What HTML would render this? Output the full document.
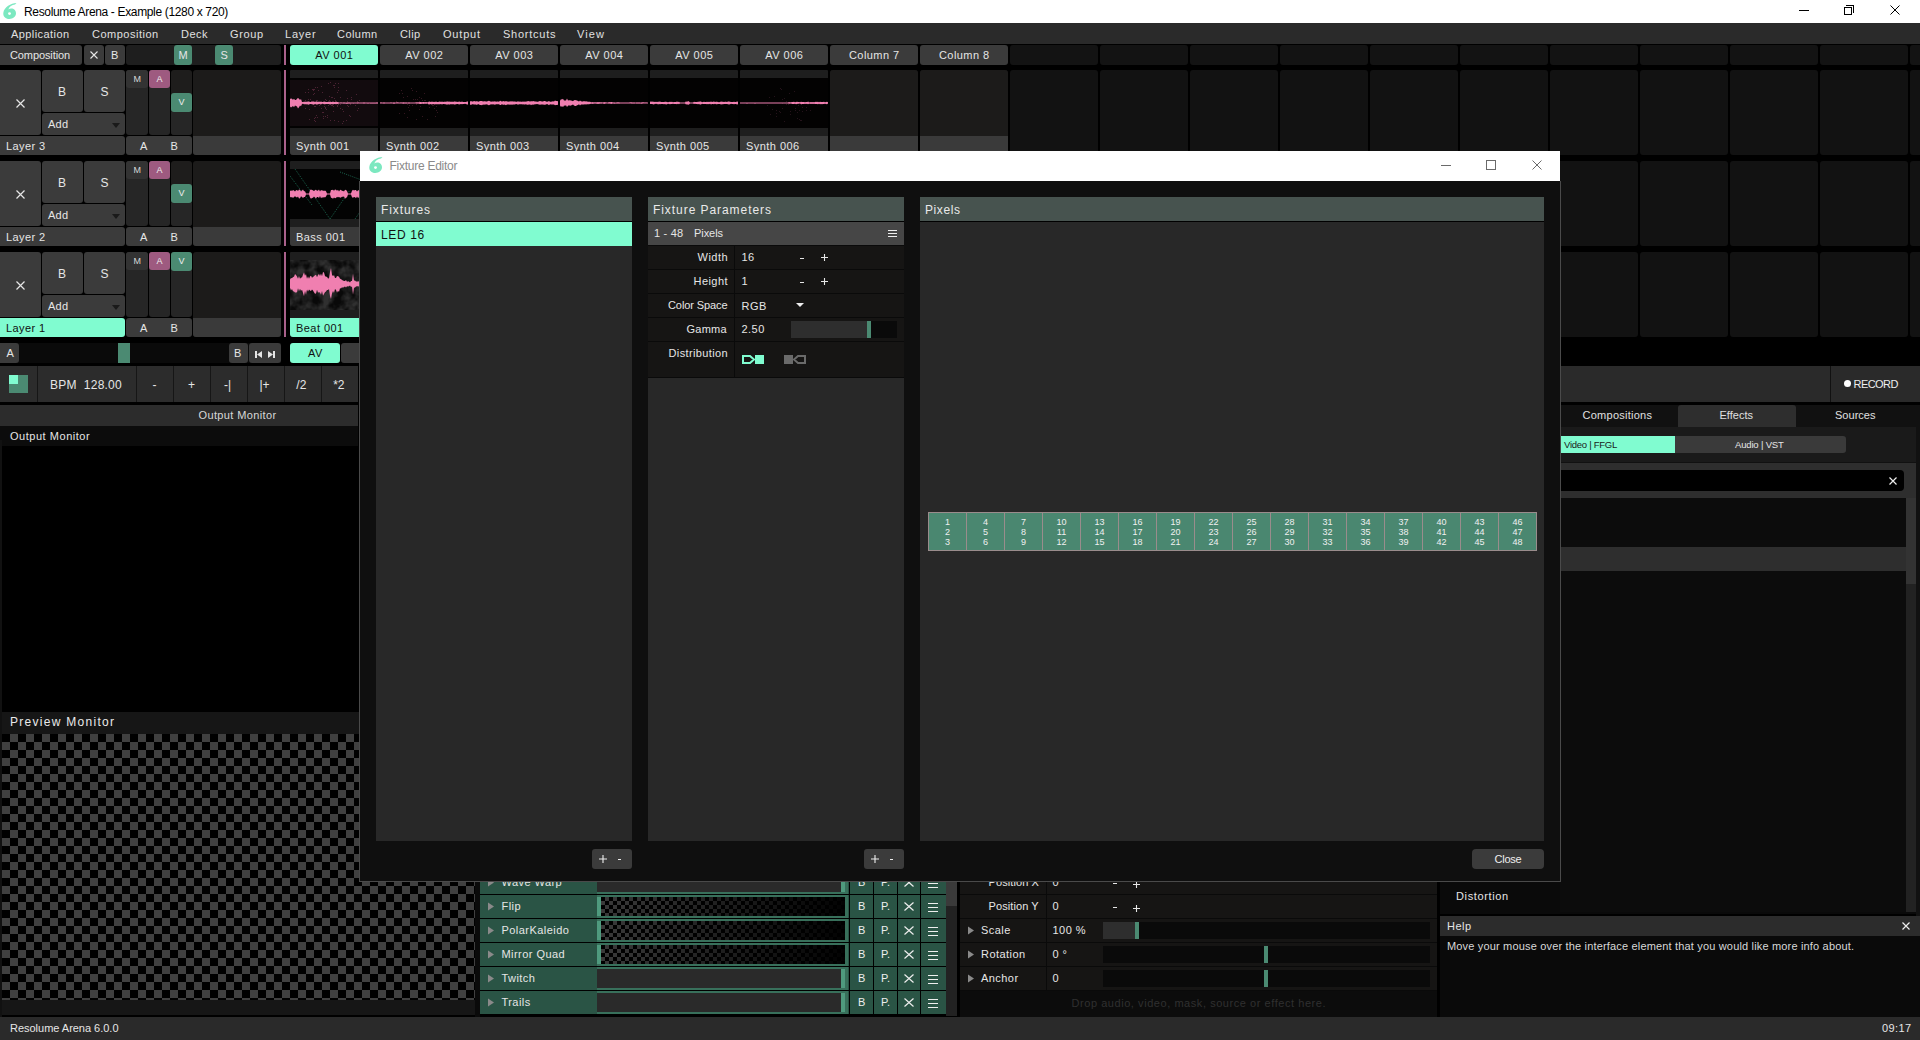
<!DOCTYPE html>
<html><head><meta charset="utf-8">
<style>
*{box-sizing:border-box;margin:0;padding:0}
html,body{width:1920px;height:1040px;overflow:hidden;background:#000;font-family:"Liberation Sans",sans-serif;color:#e8e8e8}
.a{position:absolute}
.t{position:absolute;white-space:pre;line-height:1;font-family:"Liberation Sans",sans-serif}
svg{position:absolute}
</style></head><body>
<div class="a" style="left:0px;top:0px;width:1920px;height:23px;background:#fff;"></div>
<svg class="a" style="left:3px;top:3px" width="14" height="16" viewBox="0 0 14 16"><path d="M13.5 0 C8 0.3 1 4 0.3 10 C0 13.5 2.5 16 6.3 16 C10 16 13 13.6 13 10.3 C13 7.3 10.8 5.6 8.3 5.6 C7 5.6 6 6 5.3 6.5 C6.3 3.8 9 2 12 1.6 Z" fill="#7ce8c0"/><circle cx="6.5" cy="10.6" r="1.4" fill="#fff"/></svg>
<div class="t" style="left:24.00px;top:6px;font-size:12px;color:#000;letter-spacing:-0.346px;">Resolume Arena - Example (1280 x 720)</div>
<div class="a" style="left:1799px;top:10px;width:10px;height:1px;background:#000;"></div>
<div class="a" style="left:1844px;top:7px;width:8px;height:8px;border:1px solid #000"></div>
<div class="a" style="left:1846px;top:5px;width:8px;height:8px;border-top:1px solid #000;border-right:1px solid #000"></div>
<svg class="a" style="left:1890px;top:5px" width="10" height="10" viewBox="0 0 10 10"><path d="M0.5 0.5L9.5 9.5M9.5 0.5L0.5 9.5" stroke="#000" stroke-width="1.0"/></svg>
<div class="a" style="left:0px;top:23px;width:1920px;height:21px;background:#2a2a2a;"></div>
<div class="t" style="left:11.00px;top:29px;font-size:11px;color:#e0e0e0;letter-spacing:0.430px;">Application</div>
<div class="t" style="left:92.00px;top:29px;font-size:11px;color:#e0e0e0;letter-spacing:0.498px;">Composition</div>
<div class="t" style="left:181.00px;top:29px;font-size:11px;color:#e0e0e0;letter-spacing:0.479px;">Deck</div>
<div class="t" style="left:230.00px;top:29px;font-size:11px;color:#e0e0e0;letter-spacing:0.636px;">Group</div>
<div class="t" style="left:285.00px;top:29px;font-size:11px;color:#e0e0e0;letter-spacing:0.787px;">Layer</div>
<div class="t" style="left:337.00px;top:29px;font-size:11px;color:#e0e0e0;letter-spacing:0.443px;">Column</div>
<div class="t" style="left:400.00px;top:29px;font-size:11px;color:#e0e0e0;letter-spacing:0.389px;">Clip</div>
<div class="t" style="left:443.00px;top:29px;font-size:11px;color:#e0e0e0;letter-spacing:0.807px;">Output</div>
<div class="t" style="left:503.00px;top:29px;font-size:11px;color:#e0e0e0;letter-spacing:0.754px;">Shortcuts</div>
<div class="t" style="left:577.00px;top:29px;font-size:11px;color:#e0e0e0;letter-spacing:1.100px;">View</div>
<div class="a" style="left:0px;top:45px;width:82px;height:20px;background:#3b3b3b;border-radius:0 3px 3px 0;"></div>
<div class="t" style="left:10.00px;top:50px;font-size:11px;color:#e6e6e6;letter-spacing:-0.102px;">Composition</div>
<div class="a" style="left:84px;top:45px;width:20px;height:20px;background:#3b3b3b;border-radius:3px;"></div>
<svg class="a" style="left:90px;top:51px" width="8" height="8" viewBox="0 0 8 8"><path d="M0.5 0.5L7.5 7.5M7.5 0.5L0.5 7.5" stroke="#e6e6e6" stroke-width="1.1"/></svg>
<div class="a" style="left:105px;top:45px;width:20px;height:20px;background:#3b3b3b;border-radius:3px;"></div>
<div class="t" style="left:111.00px;top:50px;font-size:11px;color:#e6e6e6;">B</div>
<div class="a" style="left:126px;top:45px;width:155px;height:20px;background:#1e1e1e;border-radius:3px;"></div>
<div class="a" style="left:174px;top:45px;width:18px;height:20px;background:#4b8a72;border-radius:3px;"></div>
<div class="t" style="left:178.50px;top:50px;font-size:11px;color:#e6e6e6;">M</div>
<div class="a" style="left:215px;top:45px;width:18px;height:20px;background:#4b8a72;border-radius:3px;"></div>
<div class="t" style="left:220.50px;top:50px;font-size:11px;color:#e6e6e6;">S</div>
<div class="a" style="left:284px;top:45px;width:2px;height:20px;background:#a8608a;"></div>
<div class="a" style="left:290px;top:45px;width:88px;height:20px;background:#80fcd0;border-radius:3px;"></div>
<div class="t" style="left:315.30px;top:50px;font-size:11px;color:#111;letter-spacing:0.450px;">AV 001</div>
<div class="a" style="left:380px;top:45px;width:88px;height:20px;background:#3b3b3b;border-radius:3px;"></div>
<div class="t" style="left:405.30px;top:50px;font-size:11px;color:#e6e6e6;letter-spacing:0.450px;">AV 002</div>
<div class="a" style="left:470px;top:45px;width:88px;height:20px;background:#3b3b3b;border-radius:3px;"></div>
<div class="t" style="left:495.30px;top:50px;font-size:11px;color:#e6e6e6;letter-spacing:0.450px;">AV 003</div>
<div class="a" style="left:560px;top:45px;width:88px;height:20px;background:#3b3b3b;border-radius:3px;"></div>
<div class="t" style="left:585.30px;top:50px;font-size:11px;color:#e6e6e6;letter-spacing:0.450px;">AV 004</div>
<div class="a" style="left:650px;top:45px;width:88px;height:20px;background:#3b3b3b;border-radius:3px;"></div>
<div class="t" style="left:675.30px;top:50px;font-size:11px;color:#e6e6e6;letter-spacing:0.450px;">AV 005</div>
<div class="a" style="left:740px;top:45px;width:88px;height:20px;background:#3b3b3b;border-radius:3px;"></div>
<div class="t" style="left:765.30px;top:50px;font-size:11px;color:#e6e6e6;letter-spacing:0.450px;">AV 006</div>
<div class="a" style="left:830px;top:45px;width:88px;height:20px;background:#3b3b3b;border-radius:3px;"></div>
<div class="t" style="left:848.95px;top:50px;font-size:11px;color:#e6e6e6;letter-spacing:0.450px;">Column 7</div>
<div class="a" style="left:920px;top:45px;width:88px;height:20px;background:#3b3b3b;border-radius:3px;"></div>
<div class="t" style="left:938.95px;top:50px;font-size:11px;color:#e6e6e6;letter-spacing:0.450px;">Column 8</div>
<div class="a" style="left:1010px;top:45px;width:88px;height:20px;background:#131313;border-radius:3px;"></div>
<div class="a" style="left:1100px;top:45px;width:88px;height:20px;background:#131313;border-radius:3px;"></div>
<div class="a" style="left:1190px;top:45px;width:88px;height:20px;background:#131313;border-radius:3px;"></div>
<div class="a" style="left:1280px;top:45px;width:88px;height:20px;background:#131313;border-radius:3px;"></div>
<div class="a" style="left:1370px;top:45px;width:88px;height:20px;background:#131313;border-radius:3px;"></div>
<div class="a" style="left:1460px;top:45px;width:88px;height:20px;background:#131313;border-radius:3px;"></div>
<div class="a" style="left:1550px;top:45px;width:88px;height:20px;background:#131313;border-radius:3px;"></div>
<div class="a" style="left:1640px;top:45px;width:88px;height:20px;background:#131313;border-radius:3px;"></div>
<div class="a" style="left:1730px;top:45px;width:88px;height:20px;background:#131313;border-radius:3px;"></div>
<div class="a" style="left:1820px;top:45px;width:88px;height:20px;background:#131313;border-radius:3px;"></div>
<div class="a" style="left:1910px;top:45px;width:88px;height:20px;background:#131313;border-radius:3px;"></div>
<div class="a" style="left:0px;top:70px;width:41px;height:65px;background:#3b3b3b;border-radius:0 3px 3px 0;"></div>
<svg class="a" style="left:16px;top:99px" width="9" height="9" viewBox="0 0 9 9"><path d="M0.5 0.5L8.5 8.5M8.5 0.5L0.5 8.5" stroke="#e6e6e6" stroke-width="1.2"/></svg>
<div class="a" style="left:42px;top:70px;width:41px;height:42px;background:#3b3b3b;border-radius:3px;"></div>
<div class="t" style="left:58.00px;top:86px;font-size:12px;color:#e6e6e6;">B</div>
<div class="a" style="left:84px;top:70px;width:41px;height:42px;background:#3b3b3b;border-radius:3px;"></div>
<div class="t" style="left:100.50px;top:86px;font-size:12px;color:#e6e6e6;">S</div>
<div class="a" style="left:42px;top:113px;width:83px;height:22px;background:#3b3b3b;border-radius:3px;"></div>
<div class="t" style="left:48.00px;top:119px;font-size:11px;color:#e6e6e6;letter-spacing:0.273px;">Add</div>
<svg class="a" style="left:112px;top:123px" width="8" height="5" viewBox="0 0 8 5"><path d="M0 0H8L4 5Z" fill="#1a1a1a"/></svg>
<div class="a" style="left:0px;top:136px;width:125px;height:19px;background:#3b3b3b;border-radius:0 3px 3px 0;"></div>
<div class="t" style="left:6.00px;top:141px;font-size:11px;color:#e6e6e6;letter-spacing:0.405px;">Layer 3</div>
<div class="a" style="left:126px;top:70px;width:22px;height:65px;background:#262626;border-radius:3px;"></div>
<div class="a" style="left:149px;top:70px;width:21px;height:65px;background:#262626;border-radius:3px;"></div>
<div class="a" style="left:171px;top:70px;width:21px;height:65px;background:#1e1d1c;border-radius:3px;"></div>
<div class="a" style="left:171px;top:112px;width:21px;height:23px;background:#262626;border-radius:0 0 3px 3px;"></div>
<div class="a" style="left:126px;top:70px;width:22px;height:18px;background:#333;border-radius:3px;"></div>
<div class="t" style="left:133.50px;top:75px;font-size:9px;color:#d8d8d8;">M</div>
<div class="a" style="left:149px;top:70px;width:21px;height:18px;background:#9e5a80;border-radius:3px;"></div>
<div class="t" style="left:156.50px;top:75px;font-size:9px;color:#eee;">A</div>
<div class="a" style="left:171px;top:93px;width:21px;height:19px;background:#4b8a72;border-radius:3px;"></div>
<div class="t" style="left:178.50px;top:98px;font-size:9px;color:#eee;">V</div>
<div class="a" style="left:126px;top:136px;width:66px;height:19px;background:#3b3b3b;border-radius:3px;"></div>
<div class="t" style="left:140.00px;top:141px;font-size:11px;color:#e6e6e6;">A</div>
<div class="t" style="left:170.50px;top:141px;font-size:11px;color:#e6e6e6;">B</div>
<div class="a" style="left:193px;top:70px;width:88px;height:85px;background:#1c1b1a;border-radius:3px;"></div>
<div class="a" style="left:193px;top:136px;width:88px;height:19px;background:#3a3a3a;border-radius:0 0 3px 3px;"></div>
<div class="a" style="left:284px;top:70px;width:2px;height:85px;background:#a8608a;"></div>
<div class="a" style="left:290px;top:70px;width:88px;height:85px;background:#121212;border-radius:3px;"></div>
<div class="a" style="left:380px;top:70px;width:88px;height:85px;background:#121212;border-radius:3px;"></div>
<div class="a" style="left:470px;top:70px;width:88px;height:85px;background:#121212;border-radius:3px;"></div>
<div class="a" style="left:560px;top:70px;width:88px;height:85px;background:#121212;border-radius:3px;"></div>
<div class="a" style="left:650px;top:70px;width:88px;height:85px;background:#121212;border-radius:3px;"></div>
<div class="a" style="left:740px;top:70px;width:88px;height:85px;background:#121212;border-radius:3px;"></div>
<div class="a" style="left:830px;top:70px;width:88px;height:85px;background:#121212;border-radius:3px;"></div>
<div class="a" style="left:920px;top:70px;width:88px;height:85px;background:#121212;border-radius:3px;"></div>
<div class="a" style="left:1010px;top:70px;width:88px;height:85px;background:#121212;border-radius:3px;"></div>
<div class="a" style="left:1100px;top:70px;width:88px;height:85px;background:#121212;border-radius:3px;"></div>
<div class="a" style="left:1190px;top:70px;width:88px;height:85px;background:#121212;border-radius:3px;"></div>
<div class="a" style="left:1280px;top:70px;width:88px;height:85px;background:#121212;border-radius:3px;"></div>
<div class="a" style="left:1370px;top:70px;width:88px;height:85px;background:#121212;border-radius:3px;"></div>
<div class="a" style="left:1460px;top:70px;width:88px;height:85px;background:#121212;border-radius:3px;"></div>
<div class="a" style="left:1550px;top:70px;width:88px;height:85px;background:#121212;border-radius:3px;"></div>
<div class="a" style="left:1640px;top:70px;width:88px;height:85px;background:#121212;border-radius:3px;"></div>
<div class="a" style="left:1730px;top:70px;width:88px;height:85px;background:#121212;border-radius:3px;"></div>
<div class="a" style="left:1820px;top:70px;width:88px;height:85px;background:#121212;border-radius:3px;"></div>
<div class="a" style="left:1910px;top:70px;width:88px;height:85px;background:#121212;border-radius:3px;"></div>
<div class="a" style="left:0px;top:161px;width:41px;height:65px;background:#3b3b3b;border-radius:0 3px 3px 0;"></div>
<svg class="a" style="left:16px;top:190px" width="9" height="9" viewBox="0 0 9 9"><path d="M0.5 0.5L8.5 8.5M8.5 0.5L0.5 8.5" stroke="#e6e6e6" stroke-width="1.2"/></svg>
<div class="a" style="left:42px;top:161px;width:41px;height:42px;background:#3b3b3b;border-radius:3px;"></div>
<div class="t" style="left:58.00px;top:177px;font-size:12px;color:#e6e6e6;">B</div>
<div class="a" style="left:84px;top:161px;width:41px;height:42px;background:#3b3b3b;border-radius:3px;"></div>
<div class="t" style="left:100.50px;top:177px;font-size:12px;color:#e6e6e6;">S</div>
<div class="a" style="left:42px;top:204px;width:83px;height:22px;background:#3b3b3b;border-radius:3px;"></div>
<div class="t" style="left:48.00px;top:210px;font-size:11px;color:#e6e6e6;letter-spacing:0.273px;">Add</div>
<svg class="a" style="left:112px;top:214px" width="8" height="5" viewBox="0 0 8 5"><path d="M0 0H8L4 5Z" fill="#1a1a1a"/></svg>
<div class="a" style="left:0px;top:227px;width:125px;height:19px;background:#3b3b3b;border-radius:0 3px 3px 0;"></div>
<div class="t" style="left:6.00px;top:232px;font-size:11px;color:#e6e6e6;letter-spacing:0.405px;">Layer 2</div>
<div class="a" style="left:126px;top:161px;width:22px;height:65px;background:#262626;border-radius:3px;"></div>
<div class="a" style="left:149px;top:161px;width:21px;height:65px;background:#262626;border-radius:3px;"></div>
<div class="a" style="left:171px;top:161px;width:21px;height:65px;background:#1e1d1c;border-radius:3px;"></div>
<div class="a" style="left:171px;top:203px;width:21px;height:23px;background:#262626;border-radius:0 0 3px 3px;"></div>
<div class="a" style="left:126px;top:161px;width:22px;height:18px;background:#333;border-radius:3px;"></div>
<div class="t" style="left:133.50px;top:166px;font-size:9px;color:#d8d8d8;">M</div>
<div class="a" style="left:149px;top:161px;width:21px;height:18px;background:#9e5a80;border-radius:3px;"></div>
<div class="t" style="left:156.50px;top:166px;font-size:9px;color:#eee;">A</div>
<div class="a" style="left:171px;top:184px;width:21px;height:19px;background:#4b8a72;border-radius:3px;"></div>
<div class="t" style="left:178.50px;top:189px;font-size:9px;color:#eee;">V</div>
<div class="a" style="left:126px;top:227px;width:66px;height:19px;background:#3b3b3b;border-radius:3px;"></div>
<div class="t" style="left:140.00px;top:232px;font-size:11px;color:#e6e6e6;">A</div>
<div class="t" style="left:170.50px;top:232px;font-size:11px;color:#e6e6e6;">B</div>
<div class="a" style="left:193px;top:161px;width:88px;height:85px;background:#1c1b1a;border-radius:3px;"></div>
<div class="a" style="left:193px;top:227px;width:88px;height:19px;background:#3a3a3a;border-radius:0 0 3px 3px;"></div>
<div class="a" style="left:284px;top:161px;width:2px;height:85px;background:#a8608a;"></div>
<div class="a" style="left:290px;top:161px;width:88px;height:85px;background:#121212;border-radius:3px;"></div>
<div class="a" style="left:380px;top:161px;width:88px;height:85px;background:#121212;border-radius:3px;"></div>
<div class="a" style="left:470px;top:161px;width:88px;height:85px;background:#121212;border-radius:3px;"></div>
<div class="a" style="left:560px;top:161px;width:88px;height:85px;background:#121212;border-radius:3px;"></div>
<div class="a" style="left:650px;top:161px;width:88px;height:85px;background:#121212;border-radius:3px;"></div>
<div class="a" style="left:740px;top:161px;width:88px;height:85px;background:#121212;border-radius:3px;"></div>
<div class="a" style="left:830px;top:161px;width:88px;height:85px;background:#121212;border-radius:3px;"></div>
<div class="a" style="left:920px;top:161px;width:88px;height:85px;background:#121212;border-radius:3px;"></div>
<div class="a" style="left:1010px;top:161px;width:88px;height:85px;background:#121212;border-radius:3px;"></div>
<div class="a" style="left:1100px;top:161px;width:88px;height:85px;background:#121212;border-radius:3px;"></div>
<div class="a" style="left:1190px;top:161px;width:88px;height:85px;background:#121212;border-radius:3px;"></div>
<div class="a" style="left:1280px;top:161px;width:88px;height:85px;background:#121212;border-radius:3px;"></div>
<div class="a" style="left:1370px;top:161px;width:88px;height:85px;background:#121212;border-radius:3px;"></div>
<div class="a" style="left:1460px;top:161px;width:88px;height:85px;background:#121212;border-radius:3px;"></div>
<div class="a" style="left:1550px;top:161px;width:88px;height:85px;background:#121212;border-radius:3px;"></div>
<div class="a" style="left:1640px;top:161px;width:88px;height:85px;background:#121212;border-radius:3px;"></div>
<div class="a" style="left:1730px;top:161px;width:88px;height:85px;background:#121212;border-radius:3px;"></div>
<div class="a" style="left:1820px;top:161px;width:88px;height:85px;background:#121212;border-radius:3px;"></div>
<div class="a" style="left:1910px;top:161px;width:88px;height:85px;background:#121212;border-radius:3px;"></div>
<div class="a" style="left:0px;top:252px;width:41px;height:65px;background:#3b3b3b;border-radius:0 3px 3px 0;"></div>
<svg class="a" style="left:16px;top:281px" width="9" height="9" viewBox="0 0 9 9"><path d="M0.5 0.5L8.5 8.5M8.5 0.5L0.5 8.5" stroke="#e6e6e6" stroke-width="1.2"/></svg>
<div class="a" style="left:42px;top:252px;width:41px;height:42px;background:#3b3b3b;border-radius:3px;"></div>
<div class="t" style="left:58.00px;top:268px;font-size:12px;color:#e6e6e6;">B</div>
<div class="a" style="left:84px;top:252px;width:41px;height:42px;background:#3b3b3b;border-radius:3px;"></div>
<div class="t" style="left:100.50px;top:268px;font-size:12px;color:#e6e6e6;">S</div>
<div class="a" style="left:42px;top:295px;width:83px;height:22px;background:#3b3b3b;border-radius:3px;"></div>
<div class="t" style="left:48.00px;top:301px;font-size:11px;color:#e6e6e6;letter-spacing:0.273px;">Add</div>
<svg class="a" style="left:112px;top:305px" width="8" height="5" viewBox="0 0 8 5"><path d="M0 0H8L4 5Z" fill="#1a1a1a"/></svg>
<div class="a" style="left:0px;top:318px;width:125px;height:19px;background:#80fcd0;border-radius:0 3px 3px 0;"></div>
<div class="t" style="left:6.00px;top:323px;font-size:11px;color:#111;letter-spacing:0.405px;">Layer 1</div>
<div class="a" style="left:126px;top:252px;width:22px;height:65px;background:#262626;border-radius:3px;"></div>
<div class="a" style="left:149px;top:252px;width:21px;height:65px;background:#262626;border-radius:3px;"></div>
<div class="a" style="left:171px;top:252px;width:21px;height:65px;background:#262626;border-radius:3px;"></div>
<div class="a" style="left:126px;top:252px;width:22px;height:18px;background:#333;border-radius:3px;"></div>
<div class="t" style="left:133.50px;top:257px;font-size:9px;color:#d8d8d8;">M</div>
<div class="a" style="left:149px;top:252px;width:21px;height:18px;background:#9e5a80;border-radius:3px;"></div>
<div class="t" style="left:156.50px;top:257px;font-size:9px;color:#eee;">A</div>
<div class="a" style="left:171px;top:252px;width:21px;height:19px;background:#4b8a72;border-radius:3px;"></div>
<div class="t" style="left:178.50px;top:257px;font-size:9px;color:#eee;">V</div>
<div class="a" style="left:126px;top:318px;width:66px;height:19px;background:#3b3b3b;border-radius:3px;"></div>
<div class="t" style="left:140.00px;top:323px;font-size:11px;color:#e6e6e6;">A</div>
<div class="t" style="left:170.50px;top:323px;font-size:11px;color:#e6e6e6;">B</div>
<div class="a" style="left:193px;top:252px;width:88px;height:85px;background:#1c1b1a;border-radius:3px;"></div>
<div class="a" style="left:193px;top:318px;width:88px;height:19px;background:#3a3a3a;border-radius:0 0 3px 3px;"></div>
<div class="a" style="left:284px;top:252px;width:2px;height:85px;background:#a8608a;"></div>
<div class="a" style="left:290px;top:252px;width:88px;height:85px;background:#121212;border-radius:3px;"></div>
<div class="a" style="left:380px;top:252px;width:88px;height:85px;background:#121212;border-radius:3px;"></div>
<div class="a" style="left:470px;top:252px;width:88px;height:85px;background:#121212;border-radius:3px;"></div>
<div class="a" style="left:560px;top:252px;width:88px;height:85px;background:#121212;border-radius:3px;"></div>
<div class="a" style="left:650px;top:252px;width:88px;height:85px;background:#121212;border-radius:3px;"></div>
<div class="a" style="left:740px;top:252px;width:88px;height:85px;background:#121212;border-radius:3px;"></div>
<div class="a" style="left:830px;top:252px;width:88px;height:85px;background:#121212;border-radius:3px;"></div>
<div class="a" style="left:920px;top:252px;width:88px;height:85px;background:#121212;border-radius:3px;"></div>
<div class="a" style="left:1010px;top:252px;width:88px;height:85px;background:#121212;border-radius:3px;"></div>
<div class="a" style="left:1100px;top:252px;width:88px;height:85px;background:#121212;border-radius:3px;"></div>
<div class="a" style="left:1190px;top:252px;width:88px;height:85px;background:#121212;border-radius:3px;"></div>
<div class="a" style="left:1280px;top:252px;width:88px;height:85px;background:#121212;border-radius:3px;"></div>
<div class="a" style="left:1370px;top:252px;width:88px;height:85px;background:#121212;border-radius:3px;"></div>
<div class="a" style="left:1460px;top:252px;width:88px;height:85px;background:#121212;border-radius:3px;"></div>
<div class="a" style="left:1550px;top:252px;width:88px;height:85px;background:#121212;border-radius:3px;"></div>
<div class="a" style="left:1640px;top:252px;width:88px;height:85px;background:#121212;border-radius:3px;"></div>
<div class="a" style="left:1730px;top:252px;width:88px;height:85px;background:#121212;border-radius:3px;"></div>
<div class="a" style="left:1820px;top:252px;width:88px;height:85px;background:#121212;border-radius:3px;"></div>
<div class="a" style="left:1910px;top:252px;width:88px;height:85px;background:#121212;border-radius:3px;"></div>
<div class="a" style="left:290px;top:70px;width:88px;height:85px;background:#1e1e1e;border-radius:1px 1px 3px 3px;"></div>
<svg class="a" style="left:290px;top:78px" width="88" height="50" viewBox="290 78 88 50"><rect x="290" y="78" width="88" height="50" fill="#030202"/><rect x="290" y="80" width="88" height="46" fill="#120b0e"/><rect x="313" y="90" width="1" height="1" fill="#4a2232"/><rect x="347" y="105" width="1" height="1" fill="#4a2232"/><rect x="351" y="97" width="1" height="1" fill="#4a2232"/><rect x="335" y="100" width="1" height="1" fill="#4a2232"/><rect x="319" y="105" width="1" height="1" fill="#4a2232"/><rect x="310" y="99" width="1" height="1" fill="#4a2232"/><rect x="340" y="104" width="1" height="1" fill="#4a2232"/><rect x="331" y="97" width="1" height="1" fill="#4a2232"/><rect x="332" y="97" width="1" height="1" fill="#4a2232"/><rect x="325" y="99" width="1" height="1" fill="#4a2232"/><rect x="357" y="103" width="1" height="1" fill="#4a2232"/><rect x="333" y="111" width="1" height="1" fill="#4a2232"/><rect x="357" y="101" width="1" height="1" fill="#4a2232"/><rect x="308" y="99" width="1" height="1" fill="#4a2232"/><rect x="340" y="97" width="1" height="1" fill="#4a2232"/><rect x="325" y="108" width="1" height="1" fill="#4a2232"/><rect x="333" y="106" width="1" height="1" fill="#4a2232"/><rect x="323" y="118" width="1" height="1" fill="#4a2232"/><rect x="353" y="103" width="1" height="1" fill="#4a2232"/><rect x="323" y="112" width="1" height="1" fill="#4a2232"/><rect x="338" y="90" width="1" height="1" fill="#4a2232"/><rect x="323" y="116" width="1" height="1" fill="#4a2232"/><rect x="329" y="100" width="1" height="1" fill="#4a2232"/><rect x="332" y="103" width="1" height="1" fill="#4a2232"/><rect x="330" y="82" width="1" height="1" fill="#4a2232"/><rect x="355" y="105" width="1" height="1" fill="#4a2232"/><rect x="316" y="115" width="1" height="1" fill="#4a2232"/><rect x="334" y="103" width="1" height="1" fill="#4a2232"/><rect x="342" y="123" width="1" height="1" fill="#4a2232"/><rect x="338" y="121" width="1" height="1" fill="#4a2232"/><rect x="356" y="94" width="1" height="1" fill="#4a2232"/><rect x="322" y="112" width="1" height="1" fill="#4a2232"/><rect x="305" y="100" width="1" height="1" fill="#4a2232"/><rect x="349" y="115" width="1" height="1" fill="#4a2232"/><rect x="338" y="83" width="1" height="1" fill="#4a2232"/><rect x="358" y="108" width="1" height="1" fill="#4a2232"/><rect x="342" y="109" width="1" height="1" fill="#4a2232"/><rect x="308" y="89" width="1" height="1" fill="#4a2232"/><rect x="315" y="121" width="1" height="1" fill="#4a2232"/><rect x="317" y="100" width="1" height="1" fill="#4a2232"/><rect x="326" y="109" width="1" height="1" fill="#4a2232"/><rect x="337" y="106" width="1" height="1" fill="#4a2232"/><rect x="332" y="105" width="1" height="1" fill="#4a2232"/><rect x="349" y="102" width="1" height="1" fill="#4a2232"/><rect x="321" y="108" width="1" height="1" fill="#4a2232"/><rect x="308" y="92" width="1" height="1" fill="#4a2232"/><rect x="314" y="106" width="1" height="1" fill="#4a2232"/><rect x="357" y="110" width="1" height="1" fill="#4a2232"/><rect x="348" y="106" width="1" height="1" fill="#4a2232"/><rect x="334" y="98" width="1" height="1" fill="#4a2232"/><rect x="313" y="89" width="1" height="1" fill="#4a2232"/><rect x="343" y="111" width="1" height="1" fill="#4a2232"/><rect x="346" y="120" width="1" height="1" fill="#4a2232"/><rect x="325" y="116" width="1" height="1" fill="#4a2232"/><rect x="357" y="103" width="1" height="1" fill="#4a2232"/><rect x="347" y="101" width="1" height="1" fill="#4a2232"/><rect x="306" y="104" width="1" height="1" fill="#4a2232"/><rect x="317" y="104" width="1" height="1" fill="#4a2232"/><rect x="324" y="106" width="1" height="1" fill="#4a2232"/><rect x="309" y="119" width="1" height="1" fill="#4a2232"/><rect x="351" y="99" width="1" height="1" fill="#4a2232"/><rect x="316" y="103" width="1" height="1" fill="#4a2232"/><rect x="340" y="108" width="1" height="1" fill="#4a2232"/><rect x="335" y="83" width="1" height="1" fill="#4a2232"/><rect x="314" y="118" width="1" height="1" fill="#4a2232"/><rect x="334" y="85" width="1" height="1" fill="#4a2232"/><rect x="317" y="87" width="1" height="1" fill="#4a2232"/><rect x="315" y="117" width="1" height="1" fill="#4a2232"/><rect x="327" y="117" width="1" height="1" fill="#4a2232"/><rect x="333" y="85" width="1" height="1" fill="#4a2232"/><rect x="318" y="90" width="1" height="1" fill="#4a2232"/><rect x="350" y="104" width="1" height="1" fill="#4a2232"/><rect x="330" y="120" width="1" height="1" fill="#4a2232"/><rect x="305" y="108" width="1" height="1" fill="#4a2232"/><rect x="315" y="87" width="1" height="1" fill="#4a2232"/><rect x="317" y="117" width="1" height="1" fill="#4a2232"/><rect x="328" y="83" width="1" height="1" fill="#4a2232"/><rect x="314" y="120" width="1" height="1" fill="#4a2232"/><rect x="346" y="90" width="1" height="1" fill="#4a2232"/><rect x="359" y="100" width="1" height="1" fill="#4a2232"/><rect x="311" y="101" width="1" height="1" fill="#4a2232"/><rect x="343" y="121" width="1" height="1" fill="#4a2232"/><rect x="347" y="98" width="1" height="1" fill="#4a2232"/><rect x="321" y="86" width="1" height="1" fill="#4a2232"/><rect x="329" y="96" width="1" height="1" fill="#4a2232"/><rect x="334" y="87" width="1" height="1" fill="#4a2232"/><rect x="322" y="92" width="1" height="1" fill="#4a2232"/><rect x="312" y="89" width="1" height="1" fill="#4a2232"/><rect x="314" y="89" width="1" height="1" fill="#4a2232"/><rect x="338" y="104" width="1" height="1" fill="#4a2232"/><rect x="309" y="109" width="1" height="1" fill="#4a2232"/><rect x="334" y="120" width="1" height="1" fill="#4a2232"/><rect x="328" y="101" width="1" height="1" fill="#4a2232"/><rect x="320" y="104" width="1" height="1" fill="#4a2232"/><rect x="337" y="105" width="1" height="1" fill="#4a2232"/><rect x="326" y="109" width="1" height="1" fill="#4a2232"/><rect x="331" y="105" width="1" height="1" fill="#4a2232"/><rect x="315" y="106" width="1" height="1" fill="#4a2232"/><rect x="314" y="93" width="1" height="1" fill="#4a2232"/><rect x="346" y="103" width="1" height="1" fill="#4a2232"/><rect x="327" y="115" width="1" height="1" fill="#4a2232"/><rect x="350" y="116" width="1" height="1" fill="#4a2232"/><rect x="328" y="105" width="1" height="1" fill="#4a2232"/><rect x="326" y="100" width="1" height="1" fill="#4a2232"/><rect x="316" y="100" width="1" height="1" fill="#4a2232"/><rect x="305" y="92" width="1" height="1" fill="#4a2232"/><rect x="337" y="92" width="1" height="1" fill="#4a2232"/><rect x="338" y="87" width="1" height="1" fill="#4a2232"/><rect x="325" y="107" width="1" height="1" fill="#4a2232"/><rect x="313" y="94" width="1" height="1" fill="#4a2232"/><path d="M290.0 99.2 L291.0 98.2 L292.0 99.1 L293.0 99.8 L294.0 98.8 L295.0 100.0 L296.0 100.0 L297.0 98.7 L298.0 98.0 L299.0 98.8 L300.0 99.9 L301.0 99.1 L302.0 102.0 L303.0 102.1 L304.0 101.8 L305.0 101.7 L306.0 101.8 L307.0 101.8 L308.0 101.4 L309.0 101.5 L310.0 101.9 L311.0 101.9 L312.0 101.6 L313.0 101.5 L314.0 101.4 L315.0 102.1 L316.0 101.5 L317.0 101.4 L318.0 102.1 L319.0 101.6 L320.0 102.1 L321.0 101.4 L322.0 102.0 L323.0 102.0 L324.0 101.5 L325.0 101.7 L326.0 102.0 L327.0 102.0 L328.0 102.0 L329.0 102.0 L330.0 101.4 L331.0 101.9 L332.0 102.0 L333.0 101.5 L334.0 102.0 L335.0 102.0 L336.0 101.6 L337.0 101.9 L338.0 102.1 L339.0 102.4 L340.0 102.4 L341.0 102.3 L342.0 102.4 L343.0 102.4 L344.0 102.3 L345.0 102.4 L346.0 102.4 L347.0 102.4 L348.0 102.3 L349.0 102.4 L350.0 102.4 L351.0 102.4 L352.0 102.4 L353.0 102.4 L354.0 102.4 L355.0 102.4 L356.0 102.4 L357.0 102.4 L358.0 102.3 L359.0 102.4 L360.0 102.4 L361.0 102.4 L362.0 102.4 L363.0 102.4 L364.0 102.3 L365.0 102.4 L366.0 102.4 L367.0 102.4 L368.0 102.4 L369.0 102.4 L370.0 102.4 L371.0 102.4 L372.0 102.4 L373.0 102.4 L374.0 102.4 L375.0 102.4 L376.0 102.4 L377.0 102.3 L378.0 102.4 L378.0 103.6 L377.0 103.7 L376.0 103.6 L375.0 103.7 L374.0 103.6 L373.0 103.7 L372.0 103.6 L371.0 103.7 L370.0 103.6 L369.0 103.6 L368.0 103.7 L367.0 103.6 L366.0 103.5 L365.0 103.6 L364.0 103.7 L363.0 103.6 L362.0 103.5 L361.0 103.5 L360.0 103.5 L359.0 103.5 L358.0 103.6 L357.0 103.5 L356.0 103.6 L355.0 103.5 L354.0 103.6 L353.0 103.5 L352.0 103.6 L351.0 103.6 L350.0 103.7 L349.0 103.5 L348.0 103.7 L347.0 103.7 L346.0 103.7 L345.0 103.5 L344.0 103.7 L343.0 103.5 L342.0 103.6 L341.0 103.6 L340.0 103.6 L339.0 103.6 L338.0 103.9 L337.0 103.9 L336.0 104.3 L335.0 103.9 L334.0 104.0 L333.0 104.5 L332.0 103.9 L331.0 104.2 L330.0 104.6 L329.0 103.9 L328.0 103.9 L327.0 104.0 L326.0 104.0 L325.0 104.2 L324.0 104.2 L323.0 103.8 L322.0 103.8 L321.0 104.6 L320.0 103.8 L319.0 104.3 L318.0 103.9 L317.0 104.5 L316.0 104.4 L315.0 103.8 L314.0 104.7 L313.0 104.4 L312.0 104.3 L311.0 103.9 L310.0 104.0 L309.0 104.5 L308.0 104.8 L307.0 104.1 L306.0 104.2 L305.0 104.2 L304.0 104.3 L303.0 103.8 L302.0 103.9 L301.0 106.2 L300.0 105.5 L299.0 107.2 L298.0 108.4 L297.0 106.5 L296.0 106.1 L295.0 105.6 L294.0 107.3 L293.0 106.0 L292.0 106.8 L291.0 107.5 L290.0 106.6Z" fill="#f07fb0"/></svg>
<div class="a" style="left:290px;top:136px;width:88px;height:19px;background:#3a3a3a;border-radius:0 0 3px 3px;"></div>
<div class="t" style="left:296.00px;top:141px;font-size:11px;color:#e6e6e6;letter-spacing:0.450px;">Synth 001</div>
<div class="a" style="left:380px;top:70px;width:88px;height:85px;background:#1e1e1e;border-radius:1px 1px 3px 3px;"></div>
<svg class="a" style="left:380px;top:78px" width="88" height="50" viewBox="380 78 88 50"><rect x="380" y="78" width="88" height="50" fill="#030202"/><rect x="407" y="104" width="1" height="1" fill="#32161f"/><rect x="435" y="116" width="1" height="1" fill="#32161f"/><rect x="436" y="102" width="1" height="1" fill="#32161f"/><rect x="424" y="100" width="1" height="1" fill="#32161f"/><rect x="403" y="97" width="1" height="1" fill="#32161f"/><rect x="433" y="105" width="1" height="1" fill="#32161f"/><rect x="416" y="91" width="1" height="1" fill="#32161f"/><rect x="419" y="97" width="1" height="1" fill="#32161f"/><rect x="420" y="106" width="1" height="1" fill="#32161f"/><rect x="396" y="101" width="1" height="1" fill="#32161f"/><rect x="402" y="93" width="1" height="1" fill="#32161f"/><rect x="404" y="113" width="1" height="1" fill="#32161f"/><rect x="429" y="107" width="1" height="1" fill="#32161f"/><rect x="411" y="88" width="1" height="1" fill="#32161f"/><rect x="416" y="104" width="1" height="1" fill="#32161f"/><rect x="419" y="109" width="1" height="1" fill="#32161f"/><rect x="416" y="119" width="1" height="1" fill="#32161f"/><rect x="427" y="119" width="1" height="1" fill="#32161f"/><rect x="422" y="100" width="1" height="1" fill="#32161f"/><rect x="409" y="110" width="1" height="1" fill="#32161f"/><rect x="434" y="104" width="1" height="1" fill="#32161f"/><rect x="425" y="100" width="1" height="1" fill="#32161f"/><rect x="415" y="99" width="1" height="1" fill="#32161f"/><rect x="399" y="93" width="1" height="1" fill="#32161f"/><rect x="420" y="103" width="1" height="1" fill="#32161f"/><rect x="434" y="108" width="1" height="1" fill="#32161f"/><rect x="425" y="102" width="1" height="1" fill="#32161f"/><rect x="396" y="102" width="1" height="1" fill="#32161f"/><rect x="408" y="107" width="1" height="1" fill="#32161f"/><rect x="417" y="99" width="1" height="1" fill="#32161f"/><rect x="413" y="99" width="1" height="1" fill="#32161f"/><rect x="401" y="90" width="1" height="1" fill="#32161f"/><rect x="436" y="106" width="1" height="1" fill="#32161f"/><rect x="415" y="99" width="1" height="1" fill="#32161f"/><rect x="426" y="102" width="1" height="1" fill="#32161f"/><rect x="422" y="116" width="1" height="1" fill="#32161f"/><rect x="432" y="105" width="1" height="1" fill="#32161f"/><rect x="412" y="90" width="1" height="1" fill="#32161f"/><rect x="421" y="98" width="1" height="1" fill="#32161f"/><rect x="407" y="117" width="1" height="1" fill="#32161f"/><rect x="407" y="96" width="1" height="1" fill="#32161f"/><rect x="399" y="113" width="1" height="1" fill="#32161f"/><rect x="419" y="101" width="1" height="1" fill="#32161f"/><rect x="424" y="93" width="1" height="1" fill="#32161f"/><rect x="412" y="105" width="1" height="1" fill="#32161f"/><rect x="409" y="105" width="1" height="1" fill="#32161f"/><rect x="436" y="110" width="1" height="1" fill="#32161f"/><rect x="437" y="112" width="1" height="1" fill="#32161f"/><path d="M380.0 102.4 L381.0 102.3 L382.0 102.4 L383.0 102.4 L384.0 102.3 L385.0 102.4 L386.0 102.4 L387.0 102.4 L388.0 102.4 L389.0 102.4 L390.0 102.4 L391.0 102.3 L392.0 102.4 L393.0 102.4 L394.0 102.2 L395.0 102.4 L396.0 102.4 L397.0 102.3 L398.0 102.3 L399.0 102.4 L400.0 102.4 L401.0 102.3 L402.0 102.4 L403.0 102.3 L404.0 102.2 L405.0 102.4 L406.0 102.3 L407.0 102.4 L408.0 102.4 L409.0 102.3 L410.0 102.4 L411.0 102.4 L412.0 102.4 L413.0 102.4 L414.0 102.4 L415.0 102.4 L416.0 102.3 L417.0 102.2 L418.0 102.3 L419.0 102.2 L420.0 102.1 L421.0 102.1 L422.0 102.2 L423.0 102.1 L424.0 101.9 L425.0 102.3 L426.0 101.9 L427.0 102.2 L428.0 102.3 L429.0 101.4 L430.0 101.8 L431.0 101.9 L432.0 101.5 L433.0 102.0 L434.0 101.8 L435.0 101.9 L436.0 101.5 L437.0 101.9 L438.0 101.9 L439.0 101.7 L440.0 101.6 L441.0 101.9 L442.0 101.6 L443.0 102.0 L444.0 101.8 L445.0 101.8 L446.0 101.7 L447.0 101.5 L448.0 101.6 L449.0 101.7 L450.0 101.6 L451.0 101.9 L452.0 101.6 L453.0 102.1 L454.0 101.5 L455.0 101.5 L456.0 101.7 L457.0 101.8 L458.0 101.9 L459.0 101.4 L460.0 101.7 L461.0 102.0 L462.0 101.6 L463.0 101.9 L464.0 101.9 L465.0 102.0 L466.0 101.9 L467.0 101.6 L468.0 101.4 L468.0 104.4 L467.0 104.4 L466.0 104.1 L465.0 103.8 L464.0 104.1 L463.0 104.0 L462.0 104.3 L461.0 103.9 L460.0 104.3 L459.0 104.6 L458.0 104.0 L457.0 104.0 L456.0 104.3 L455.0 104.6 L454.0 104.6 L453.0 103.9 L452.0 104.4 L451.0 104.0 L450.0 104.4 L449.0 104.4 L448.0 104.3 L447.0 104.7 L446.0 104.3 L445.0 104.3 L444.0 104.0 L443.0 104.0 L442.0 104.4 L441.0 104.0 L440.0 104.2 L439.0 104.3 L438.0 104.2 L437.0 104.2 L436.0 104.3 L435.0 104.2 L434.0 104.2 L433.0 104.0 L432.0 104.5 L431.0 104.2 L430.0 104.0 L429.0 104.7 L428.0 103.7 L427.0 103.6 L426.0 104.0 L425.0 103.6 L424.0 104.1 L423.0 103.7 L422.0 103.8 L421.0 104.0 L420.0 104.0 L419.0 103.7 L418.0 103.6 L417.0 103.8 L416.0 103.6 L415.0 103.6 L414.0 103.6 L413.0 103.6 L412.0 103.6 L411.0 103.6 L410.0 103.6 L409.0 103.7 L408.0 103.6 L407.0 103.5 L406.0 103.7 L405.0 103.5 L404.0 103.8 L403.0 103.8 L402.0 103.5 L401.0 103.6 L400.0 103.6 L399.0 103.6 L398.0 103.6 L397.0 103.6 L396.0 103.5 L395.0 103.6 L394.0 103.9 L393.0 103.5 L392.0 103.6 L391.0 103.6 L390.0 103.6 L389.0 103.6 L388.0 103.6 L387.0 103.6 L386.0 103.6 L385.0 103.6 L384.0 103.7 L383.0 103.6 L382.0 103.5 L381.0 103.6 L380.0 103.6Z" fill="#f07fb0"/></svg>
<div class="a" style="left:380px;top:136px;width:88px;height:19px;background:#3a3a3a;border-radius:0 0 3px 3px;"></div>
<div class="t" style="left:386.00px;top:141px;font-size:11px;color:#e6e6e6;letter-spacing:0.450px;">Synth 002</div>
<div class="a" style="left:470px;top:70px;width:88px;height:85px;background:#1e1e1e;border-radius:1px 1px 3px 3px;"></div>
<svg class="a" style="left:470px;top:78px" width="88" height="50" viewBox="470 78 88 50"><rect x="470" y="78" width="88" height="50" fill="#030202"/><path d="M470.0 101.5 L471.0 101.1 L472.0 101.6 L473.0 101.6 L474.0 101.1 L475.0 101.3 L476.0 101.5 L477.0 101.0 L478.0 101.8 L479.0 101.6 L480.0 101.0 L481.0 101.0 L482.0 100.9 L483.0 101.5 L484.0 101.3 L485.0 101.2 L486.0 101.4 L487.0 101.5 L488.0 101.0 L489.0 100.8 L490.0 101.2 L491.0 101.7 L492.0 101.4 L493.0 101.6 L494.0 101.5 L495.0 101.2 L496.0 101.7 L497.0 101.6 L498.0 101.6 L499.0 101.7 L500.0 100.8 L501.0 101.1 L502.0 101.7 L503.0 101.0 L504.0 101.2 L505.0 101.4 L506.0 100.9 L507.0 101.6 L508.0 101.4 L509.0 101.7 L510.0 101.2 L511.0 101.6 L512.0 101.2 L513.0 101.4 L514.0 101.5 L515.0 101.6 L516.0 101.7 L517.0 101.7 L518.0 101.2 L519.0 101.8 L520.0 101.5 L521.0 101.8 L522.0 101.7 L523.0 101.5 L524.0 101.7 L525.0 101.4 L526.0 101.8 L527.0 101.3 L528.0 101.3 L529.0 101.1 L530.0 101.8 L531.0 100.9 L532.0 101.5 L533.0 100.9 L534.0 101.2 L535.0 101.5 L536.0 101.6 L537.0 101.8 L538.0 101.7 L539.0 101.2 L540.0 101.0 L541.0 101.3 L542.0 101.5 L543.0 101.4 L544.0 100.9 L545.0 101.0 L546.0 101.5 L547.0 101.8 L548.0 101.4 L549.0 100.9 L550.0 101.7 L551.0 101.7 L552.0 101.5 L553.0 101.3 L554.0 101.5 L555.0 100.4 L556.0 100.9 L557.0 101.0 L558.0 101.2 L558.0 104.8 L557.0 105.1 L556.0 105.0 L555.0 105.2 L554.0 104.4 L553.0 104.5 L552.0 104.6 L551.0 104.4 L550.0 104.2 L549.0 105.3 L548.0 104.5 L547.0 104.0 L546.0 104.4 L545.0 104.8 L544.0 104.7 L543.0 104.4 L542.0 104.4 L541.0 104.6 L540.0 104.7 L539.0 104.4 L538.0 104.3 L537.0 104.1 L536.0 104.3 L535.0 104.3 L534.0 104.6 L533.0 104.8 L532.0 104.5 L531.0 105.2 L530.0 104.2 L529.0 104.7 L528.0 104.6 L527.0 104.9 L526.0 104.1 L525.0 104.7 L524.0 104.2 L523.0 104.4 L522.0 104.2 L521.0 104.3 L520.0 104.3 L519.0 104.2 L518.0 104.7 L517.0 104.3 L516.0 104.1 L515.0 104.4 L514.0 104.4 L513.0 104.6 L512.0 104.7 L511.0 104.4 L510.0 104.8 L509.0 104.5 L508.0 104.6 L507.0 104.5 L506.0 105.2 L505.0 104.7 L504.0 104.6 L503.0 105.1 L502.0 104.1 L501.0 105.1 L500.0 105.0 L499.0 104.3 L498.0 104.3 L497.0 104.3 L496.0 104.3 L495.0 104.7 L494.0 104.4 L493.0 104.3 L492.0 104.4 L491.0 104.3 L490.0 104.8 L489.0 105.2 L488.0 105.1 L487.0 104.3 L486.0 104.5 L485.0 104.6 L484.0 104.7 L483.0 104.5 L482.0 105.2 L481.0 105.1 L480.0 105.1 L479.0 104.4 L478.0 104.1 L477.0 105.0 L476.0 104.4 L475.0 104.5 L474.0 104.6 L473.0 104.2 L472.0 104.2 L471.0 105.0 L470.0 104.5Z" fill="#f07fb0"/></svg>
<div class="a" style="left:470px;top:136px;width:88px;height:19px;background:#3a3a3a;border-radius:0 0 3px 3px;"></div>
<div class="t" style="left:476.00px;top:141px;font-size:11px;color:#e6e6e6;letter-spacing:0.450px;">Synth 003</div>
<div class="a" style="left:560px;top:70px;width:88px;height:85px;background:#1e1e1e;border-radius:1px 1px 3px 3px;"></div>
<svg class="a" style="left:560px;top:78px" width="88" height="50" viewBox="560 78 88 50"><rect x="560" y="78" width="88" height="50" fill="#030202"/><path d="M560.0 100.7 L561.0 99.3 L562.0 99.5 L563.0 98.8 L564.0 100.4 L565.0 100.4 L566.0 100.4 L567.0 98.6 L568.0 100.4 L569.0 100.3 L570.0 100.3 L571.0 100.5 L572.0 100.7 L573.0 101.2 L574.0 100.2 L575.0 99.9 L576.0 100.2 L577.0 100.4 L578.0 100.9 L579.0 101.4 L580.0 100.4 L581.0 101.2 L582.0 101.5 L583.0 101.4 L584.0 101.0 L585.0 101.5 L586.0 101.2 L587.0 101.6 L588.0 101.7 L589.0 101.7 L590.0 101.8 L591.0 102.2 L592.0 102.2 L593.0 102.1 L594.0 102.4 L595.0 102.1 L596.0 102.4 L597.0 102.0 L598.0 102.3 L599.0 102.0 L600.0 102.3 L601.0 102.2 L602.0 102.3 L603.0 102.4 L604.0 102.0 L605.0 102.3 L606.0 102.3 L607.0 102.4 L608.0 102.4 L609.0 102.1 L610.0 102.3 L611.0 102.0 L612.0 102.1 L613.0 102.4 L614.0 102.2 L615.0 102.4 L616.0 102.4 L617.0 102.2 L618.0 102.3 L619.0 102.2 L620.0 102.4 L621.0 102.4 L622.0 102.4 L623.0 102.4 L624.0 102.4 L625.0 102.4 L626.0 102.4 L627.0 102.4 L628.0 102.4 L629.0 102.4 L630.0 102.3 L631.0 102.3 L632.0 102.3 L633.0 102.4 L634.0 102.3 L635.0 102.4 L636.0 102.4 L637.0 102.2 L638.0 102.4 L639.0 102.2 L640.0 102.4 L641.0 102.4 L642.0 102.2 L643.0 102.2 L644.0 102.3 L645.0 102.4 L646.0 102.3 L647.0 102.4 L648.0 102.4 L648.0 103.6 L647.0 103.6 L646.0 103.5 L645.0 103.5 L644.0 103.6 L643.0 103.6 L642.0 103.8 L641.0 103.7 L640.0 103.6 L639.0 103.7 L638.0 103.6 L637.0 103.8 L636.0 103.6 L635.0 103.6 L634.0 103.7 L633.0 103.6 L632.0 103.7 L631.0 103.6 L630.0 103.6 L629.0 103.5 L628.0 103.5 L627.0 103.5 L626.0 103.6 L625.0 103.6 L624.0 103.5 L623.0 103.6 L622.0 103.5 L621.0 103.5 L620.0 103.6 L619.0 103.8 L618.0 103.6 L617.0 103.8 L616.0 103.5 L615.0 103.7 L614.0 103.8 L613.0 103.6 L612.0 103.8 L611.0 103.9 L610.0 103.6 L609.0 103.8 L608.0 103.6 L607.0 103.5 L606.0 103.6 L605.0 103.7 L604.0 104.0 L603.0 103.5 L602.0 103.6 L601.0 103.8 L600.0 103.6 L599.0 103.9 L598.0 103.7 L597.0 103.9 L596.0 103.6 L595.0 103.8 L594.0 103.5 L593.0 104.0 L592.0 103.7 L591.0 103.7 L590.0 104.1 L589.0 104.3 L588.0 104.3 L587.0 104.2 L586.0 104.5 L585.0 104.2 L584.0 104.6 L583.0 104.4 L582.0 104.6 L581.0 104.6 L580.0 105.5 L579.0 104.3 L578.0 105.1 L577.0 105.2 L576.0 106.0 L575.0 105.9 L574.0 105.6 L573.0 104.6 L572.0 105.1 L571.0 105.5 L570.0 105.7 L569.0 105.3 L568.0 105.7 L567.0 107.0 L566.0 105.2 L565.0 105.7 L564.0 105.6 L563.0 107.2 L562.0 106.1 L561.0 107.0 L560.0 105.4Z" fill="#f07fb0"/></svg>
<div class="a" style="left:560px;top:136px;width:88px;height:19px;background:#3a3a3a;border-radius:0 0 3px 3px;"></div>
<div class="t" style="left:566.00px;top:141px;font-size:11px;color:#e6e6e6;letter-spacing:0.450px;">Synth 004</div>
<div class="a" style="left:650px;top:70px;width:88px;height:85px;background:#1e1e1e;border-radius:1px 1px 3px 3px;"></div>
<svg class="a" style="left:650px;top:78px" width="88" height="50" viewBox="650 78 88 50"><rect x="650" y="78" width="88" height="50" fill="#030202"/><path d="M650.0 101.6 L651.0 101.8 L652.0 101.6 L653.0 101.7 L654.0 101.7 L655.0 102.1 L656.0 101.8 L657.0 102.1 L658.0 101.7 L659.0 101.7 L660.0 101.6 L661.0 102.1 L662.0 102.0 L663.0 101.9 L664.0 101.9 L665.0 101.8 L666.0 101.7 L667.0 101.9 L668.0 102.2 L669.0 102.1 L670.0 101.8 L671.0 102.0 L672.0 101.7 L673.0 102.2 L674.0 101.9 L675.0 101.9 L676.0 101.9 L677.0 101.6 L678.0 102.1 L679.0 101.7 L680.0 102.4 L681.0 102.4 L682.0 102.4 L683.0 102.4 L684.0 102.4 L685.0 102.4 L686.0 101.2 L687.0 101.9 L688.0 101.0 L689.0 101.5 L690.0 102.4 L691.0 102.4 L692.0 102.4 L693.0 102.4 L694.0 101.7 L695.0 102.1 L696.0 102.0 L697.0 101.9 L698.0 101.8 L699.0 101.8 L700.0 101.6 L701.0 101.6 L702.0 102.2 L703.0 101.9 L704.0 101.8 L705.0 102.0 L706.0 102.0 L707.0 101.7 L708.0 102.0 L709.0 101.7 L710.0 102.1 L711.0 101.6 L712.0 102.1 L713.0 101.8 L714.0 101.6 L715.0 102.1 L716.0 101.7 L717.0 101.8 L718.0 101.9 L719.0 102.2 L720.0 102.1 L721.0 101.6 L722.0 101.8 L723.0 101.7 L724.0 102.0 L725.0 101.8 L726.0 101.8 L727.0 102.1 L728.0 101.6 L729.0 101.6 L730.0 101.7 L731.0 102.0 L732.0 102.0 L733.0 102.1 L734.0 101.7 L735.0 102.1 L736.0 102.0 L737.0 101.6 L738.0 101.8 L738.0 104.3 L737.0 104.4 L736.0 104.0 L735.0 103.9 L734.0 104.3 L733.0 103.9 L732.0 104.1 L731.0 103.8 L730.0 104.2 L729.0 104.5 L728.0 104.2 L727.0 103.9 L726.0 104.1 L725.0 104.0 L724.0 104.0 L723.0 104.2 L722.0 104.2 L721.0 104.4 L720.0 103.9 L719.0 103.9 L718.0 104.1 L717.0 104.2 L716.0 104.3 L715.0 103.8 L714.0 104.2 L713.0 104.1 L712.0 103.9 L711.0 104.4 L710.0 103.7 L709.0 104.2 L708.0 104.0 L707.0 104.2 L706.0 104.1 L705.0 104.1 L704.0 104.0 L703.0 104.0 L702.0 103.8 L701.0 104.5 L700.0 104.4 L699.0 104.1 L698.0 104.3 L697.0 104.0 L696.0 104.0 L695.0 103.7 L694.0 104.1 L693.0 103.6 L692.0 103.6 L691.0 103.6 L690.0 103.5 L689.0 104.5 L688.0 104.7 L687.0 104.2 L686.0 104.6 L685.0 103.6 L684.0 103.5 L683.0 103.5 L682.0 103.6 L681.0 103.5 L680.0 103.5 L679.0 104.2 L678.0 103.8 L677.0 104.2 L676.0 103.9 L675.0 104.0 L674.0 104.1 L673.0 103.7 L672.0 104.1 L671.0 103.9 L670.0 104.2 L669.0 104.0 L668.0 103.7 L667.0 104.2 L666.0 104.4 L665.0 104.1 L664.0 104.2 L663.0 104.0 L662.0 103.9 L661.0 103.9 L660.0 104.3 L659.0 104.1 L658.0 104.4 L657.0 103.8 L656.0 104.1 L655.0 103.8 L654.0 104.4 L653.0 104.3 L652.0 104.1 L651.0 104.0 L650.0 104.1Z" fill="#f07fb0"/></svg>
<div class="a" style="left:650px;top:136px;width:88px;height:19px;background:#3a3a3a;border-radius:0 0 3px 3px;"></div>
<div class="t" style="left:656.00px;top:141px;font-size:11px;color:#e6e6e6;letter-spacing:0.450px;">Synth 005</div>
<div class="a" style="left:740px;top:70px;width:88px;height:85px;background:#1e1e1e;border-radius:1px 1px 3px 3px;"></div>
<svg class="a" style="left:740px;top:78px" width="88" height="50" viewBox="740 78 88 50"><rect x="740" y="78" width="88" height="50" fill="#030202"/><rect x="767" y="105" width="1" height="1" fill="#24121a"/><rect x="784" y="98" width="1" height="1" fill="#24121a"/><rect x="801" y="104" width="1" height="1" fill="#24121a"/><rect x="784" y="121" width="1" height="1" fill="#24121a"/><rect x="781" y="89" width="1" height="1" fill="#24121a"/><rect x="769" y="97" width="1" height="1" fill="#24121a"/><rect x="797" y="112" width="1" height="1" fill="#24121a"/><rect x="801" y="120" width="1" height="1" fill="#24121a"/><rect x="810" y="110" width="1" height="1" fill="#24121a"/><rect x="806" y="110" width="1" height="1" fill="#24121a"/><rect x="780" y="112" width="1" height="1" fill="#24121a"/><rect x="788" y="102" width="1" height="1" fill="#24121a"/><rect x="782" y="103" width="1" height="1" fill="#24121a"/><rect x="799" y="110" width="1" height="1" fill="#24121a"/><rect x="795" y="110" width="1" height="1" fill="#24121a"/><rect x="782" y="99" width="1" height="1" fill="#24121a"/><rect x="786" y="101" width="1" height="1" fill="#24121a"/><rect x="799" y="119" width="1" height="1" fill="#24121a"/><rect x="776" y="110" width="1" height="1" fill="#24121a"/><rect x="774" y="96" width="1" height="1" fill="#24121a"/><rect x="786" y="104" width="1" height="1" fill="#24121a"/><rect x="808" y="101" width="1" height="1" fill="#24121a"/><rect x="779" y="111" width="1" height="1" fill="#24121a"/><rect x="780" y="88" width="1" height="1" fill="#24121a"/><rect x="795" y="108" width="1" height="1" fill="#24121a"/><rect x="776" y="113" width="1" height="1" fill="#24121a"/><rect x="794" y="91" width="1" height="1" fill="#24121a"/><rect x="772" y="109" width="1" height="1" fill="#24121a"/><rect x="790" y="114" width="1" height="1" fill="#24121a"/><rect x="770" y="114" width="1" height="1" fill="#24121a"/><rect x="802" y="111" width="1" height="1" fill="#24121a"/><rect x="797" y="118" width="1" height="1" fill="#24121a"/><rect x="798" y="105" width="1" height="1" fill="#24121a"/><rect x="776" y="116" width="1" height="1" fill="#24121a"/><rect x="802" y="107" width="1" height="1" fill="#24121a"/><rect x="790" y="111" width="1" height="1" fill="#24121a"/><rect x="800" y="120" width="1" height="1" fill="#24121a"/><rect x="782" y="108" width="1" height="1" fill="#24121a"/><rect x="798" y="103" width="1" height="1" fill="#24121a"/><rect x="789" y="93" width="1" height="1" fill="#24121a"/><rect x="788" y="104" width="1" height="1" fill="#24121a"/><rect x="806" y="107" width="1" height="1" fill="#24121a"/><path d="M740.0 102.4 L741.0 102.4 L742.0 102.4 L743.0 102.4 L744.0 102.4 L745.0 102.4 L746.0 102.4 L747.0 102.4 L748.0 102.4 L749.0 102.4 L750.0 102.4 L751.0 102.4 L752.0 102.4 L753.0 102.4 L754.0 102.4 L755.0 102.4 L756.0 102.4 L757.0 102.4 L758.0 102.4 L759.0 102.4 L760.0 102.4 L761.0 102.4 L762.0 102.4 L763.0 102.4 L764.0 102.4 L765.0 102.4 L766.0 102.4 L767.0 102.4 L768.0 102.4 L769.0 102.4 L770.0 102.4 L771.0 102.4 L772.0 102.4 L773.0 102.4 L774.0 102.4 L775.0 102.4 L776.0 102.4 L777.0 102.4 L778.0 102.4 L779.0 102.4 L780.0 102.4 L781.0 102.4 L782.0 102.4 L783.0 102.4 L784.0 102.4 L785.0 102.4 L786.0 102.4 L787.0 102.4 L788.0 102.4 L789.0 102.0 L790.0 102.2 L791.0 102.2 L792.0 102.0 L793.0 102.1 L794.0 101.8 L795.0 102.2 L796.0 101.9 L797.0 101.8 L798.0 102.0 L799.0 102.1 L800.0 102.2 L801.0 101.7 L802.0 102.0 L803.0 102.0 L804.0 102.0 L805.0 102.2 L806.0 101.9 L807.0 102.1 L808.0 101.8 L809.0 102.3 L810.0 102.2 L811.0 102.0 L812.0 102.2 L813.0 101.9 L814.0 102.2 L815.0 101.9 L816.0 101.8 L817.0 101.9 L818.0 101.7 L819.0 102.2 L820.0 101.8 L821.0 101.9 L822.0 101.9 L823.0 102.0 L824.0 101.8 L825.0 102.2 L826.0 102.1 L827.0 101.8 L828.0 102.2 L828.0 103.6 L827.0 104.2 L826.0 103.9 L825.0 103.8 L824.0 104.1 L823.0 104.0 L822.0 104.2 L821.0 104.1 L820.0 104.3 L819.0 103.8 L818.0 104.3 L817.0 103.9 L816.0 104.0 L815.0 103.9 L814.0 103.8 L813.0 104.1 L812.0 103.8 L811.0 103.9 L810.0 103.8 L809.0 103.7 L808.0 104.2 L807.0 103.8 L806.0 104.1 L805.0 103.8 L804.0 104.0 L803.0 104.0 L802.0 104.0 L801.0 104.2 L800.0 103.6 L799.0 103.8 L798.0 103.8 L797.0 104.1 L796.0 104.2 L795.0 103.7 L794.0 104.1 L793.0 103.9 L792.0 104.0 L791.0 103.6 L790.0 103.8 L789.0 103.8 L788.0 103.6 L787.0 103.5 L786.0 103.5 L785.0 103.6 L784.0 103.5 L783.0 103.5 L782.0 103.6 L781.0 103.5 L780.0 103.5 L779.0 103.5 L778.0 103.6 L777.0 103.5 L776.0 103.6 L775.0 103.5 L774.0 103.5 L773.0 103.6 L772.0 103.6 L771.0 103.6 L770.0 103.6 L769.0 103.6 L768.0 103.6 L767.0 103.5 L766.0 103.6 L765.0 103.6 L764.0 103.6 L763.0 103.6 L762.0 103.5 L761.0 103.6 L760.0 103.6 L759.0 103.5 L758.0 103.6 L757.0 103.6 L756.0 103.5 L755.0 103.7 L754.0 103.6 L753.0 103.6 L752.0 103.5 L751.0 103.5 L750.0 103.6 L749.0 103.6 L748.0 103.6 L747.0 103.7 L746.0 103.5 L745.0 103.5 L744.0 103.5 L743.0 103.6 L742.0 103.6 L741.0 103.6 L740.0 103.6Z" fill="#f07fb0"/></svg>
<div class="a" style="left:740px;top:136px;width:88px;height:19px;background:#3a3a3a;border-radius:0 0 3px 3px;"></div>
<div class="t" style="left:746.00px;top:141px;font-size:11px;color:#e6e6e6;letter-spacing:0.450px;">Synth 006</div>
<div class="a" style="left:830px;top:70px;width:88px;height:85px;background:#1c1b1a;border-radius:3px;"></div>
<div class="a" style="left:830px;top:136px;width:88px;height:19px;background:#3a3a3a;border-radius:0 0 3px 3px;"></div>
<div class="a" style="left:920px;top:70px;width:88px;height:85px;background:#1c1b1a;border-radius:3px;"></div>
<div class="a" style="left:920px;top:136px;width:88px;height:19px;background:#3a3a3a;border-radius:0 0 3px 3px;"></div>
<div class="a" style="left:290px;top:161px;width:88px;height:85px;background:#1e1e1e;border-radius:1px 1px 3px 3px;"></div>
<svg class="a" style="left:290px;top:169px" width="88" height="50" viewBox="290 169 88 50"><rect x="290" y="169" width="88" height="50" fill="#030303"/><path d="M290 176 L312 205 M295 169 L330 219 M340 172 L375 185 M330 219 L350 190 M355 219 L372 195" stroke="#1f7a5e" stroke-width="0.8" stroke-dasharray="1 1.2"/><path d="M290.0 191.2 L291.0 190.2 L292.0 191.1 L293.0 189.9 L294.0 190.5 L295.0 191.5 L296.0 190.3 L297.0 189.9 L298.0 191.1 L299.0 189.5 L300.0 189.8 L301.0 191.5 L302.0 190.5 L303.0 189.6 L304.0 191.2 L305.0 191.3 L306.0 193.4 L307.0 193.4 L308.0 193.4 L309.0 193.4 L310.0 189.9 L311.0 189.6 L312.0 190.0 L313.0 190.3 L314.0 191.3 L315.0 189.9 L316.0 189.7 L317.0 190.7 L318.0 190.6 L319.0 189.5 L320.0 191.5 L321.0 190.1 L322.0 190.5 L323.0 190.4 L324.0 191.1 L325.0 190.4 L326.0 191.2 L327.0 193.4 L328.0 193.4 L329.0 193.4 L330.0 193.4 L331.0 190.0 L332.0 190.1 L333.0 189.7 L334.0 190.7 L335.0 189.6 L336.0 189.7 L337.0 190.8 L338.0 189.8 L339.0 191.4 L340.0 190.0 L341.0 189.8 L342.0 191.0 L343.0 190.7 L344.0 191.4 L345.0 189.7 L346.0 190.0 L347.0 191.0 L348.0 193.4 L349.0 193.4 L350.0 193.4 L351.0 193.4 L352.0 190.7 L353.0 189.8 L354.0 190.4 L355.0 190.0 L356.0 190.1 L357.0 191.5 L358.0 190.2 L359.0 190.3 L360.0 190.7 L361.0 189.7 L362.0 191.3 L363.0 191.5 L364.0 191.2 L365.0 190.2 L366.0 193.4 L367.0 193.4 L368.0 193.4 L369.0 193.4 L370.0 190.4 L371.0 190.1 L372.0 190.0 L373.0 191.5 L374.0 191.4 L375.0 191.2 L376.0 191.0 L377.0 190.9 L378.0 190.7 L378.0 196.9 L377.0 196.5 L376.0 197.0 L375.0 196.9 L374.0 196.7 L373.0 196.3 L372.0 198.2 L371.0 198.2 L370.0 196.9 L369.0 194.6 L368.0 194.5 L367.0 194.5 L366.0 194.5 L365.0 197.2 L364.0 196.9 L363.0 196.4 L362.0 196.2 L361.0 197.6 L360.0 197.6 L359.0 197.2 L358.0 198.0 L357.0 196.5 L356.0 198.2 L355.0 197.2 L354.0 197.1 L353.0 197.7 L352.0 197.3 L351.0 194.6 L350.0 194.6 L349.0 194.5 L348.0 194.6 L347.0 197.2 L346.0 197.8 L345.0 198.7 L344.0 196.4 L343.0 196.8 L342.0 196.7 L341.0 197.4 L340.0 197.8 L339.0 196.7 L338.0 197.6 L337.0 196.8 L336.0 198.0 L335.0 198.3 L334.0 197.6 L333.0 198.7 L332.0 197.9 L331.0 197.7 L330.0 194.6 L329.0 194.5 L328.0 194.6 L327.0 194.6 L326.0 196.4 L325.0 197.6 L324.0 196.9 L323.0 197.7 L322.0 197.3 L321.0 198.3 L320.0 196.1 L319.0 198.1 L318.0 197.1 L317.0 197.0 L316.0 198.6 L315.0 197.6 L314.0 196.6 L313.0 197.7 L312.0 198.1 L311.0 198.7 L310.0 197.5 L309.0 194.5 L308.0 194.5 L307.0 194.6 L306.0 194.6 L305.0 196.9 L304.0 196.9 L303.0 198.0 L302.0 196.9 L301.0 196.3 L300.0 198.2 L299.0 198.6 L298.0 196.4 L297.0 197.6 L296.0 197.0 L295.0 196.3 L294.0 197.0 L293.0 197.9 L292.0 197.0 L291.0 197.5 L290.0 196.8Z" fill="#f07fb0"/></svg>
<div class="a" style="left:290px;top:227px;width:88px;height:19px;background:#3a3a3a;border-radius:0 0 3px 3px;"></div>
<div class="t" style="left:296.00px;top:232px;font-size:11px;color:#e6e6e6;letter-spacing:0.450px;">Bass 001</div>
<div class="a" style="left:290px;top:252px;width:88px;height:85px;background:#1e1e1e;border-radius:1px 1px 3px 3px;"></div>
<svg class="a" style="left:290px;top:260px" width="88" height="50" viewBox="290 260 88 50"><defs><filter id="tb" x="0" y="0" width="100%" height="100%"><feTurbulence type="fractalNoise" baseFrequency="0.09" numOctaves="3" seed="4"/><feColorMatrix type="matrix" values="0 0 0 0 0  0 0 0 0 0  0 0 0 0 0  2.6 0 0 0 -0.75"/></filter></defs><rect x="290" y="260" width="88" height="50" fill="#303030"/><rect x="290" y="260" width="88" height="50" fill="#e8e8e8" filter="url(#tb)" opacity="0.8"/><path d="M290.0 279.6 L291.0 277.9 L292.0 278.2 L293.0 276.9 L294.0 276.7 L295.0 273.9 L296.0 275.1 L297.0 276.6 L298.0 278.8 L299.0 276.1 L300.0 278.8 L301.0 277.6 L302.0 277.4 L303.0 274.7 L304.0 272.3 L305.0 275.7 L306.0 274.1 L307.0 278.7 L308.0 276.2 L309.0 278.8 L310.0 276.5 L311.0 275.8 L312.0 277.8 L313.0 277.0 L314.0 276.2 L315.0 275.2 L316.0 274.8 L317.0 277.3 L318.0 275.1 L319.0 274.0 L320.0 276.0 L321.0 273.4 L322.0 276.3 L323.0 272.1 L324.0 272.5 L325.0 276.0 L326.0 276.7 L327.0 276.7 L328.0 278.6 L329.0 278.3 L330.0 272.1 L331.0 268.1 L332.0 274.7 L333.0 276.3 L334.0 275.0 L335.0 278.1 L336.0 278.0 L337.0 276.1 L338.0 276.2 L339.0 276.7 L340.0 278.7 L341.0 279.0 L342.0 279.9 L343.0 280.4 L344.0 280.9 L345.0 280.9 L346.0 280.1 L347.0 281.7 L348.0 281.3 L349.0 281.6 L350.0 282.4 L351.0 281.0 L352.0 281.0 L353.0 273.7 L354.0 280.5 L355.0 280.6 L356.0 281.5 L357.0 281.6 L358.0 281.5 L359.0 281.2 L360.0 280.5 L361.0 281.4 L362.0 280.5 L363.0 281.7 L364.0 280.2 L365.0 281.4 L366.0 281.1 L367.0 280.3 L368.0 281.4 L369.0 281.2 L370.0 281.1 L371.0 281.7 L372.0 280.7 L373.0 280.9 L374.0 281.3 L375.0 281.7 L376.0 281.3 L377.0 281.8 L378.0 281.1 L378.0 287.0 L377.0 285.8 L376.0 286.6 L375.0 286.1 L374.0 286.3 L373.0 287.3 L372.0 287.1 L371.0 286.0 L370.0 287.0 L369.0 286.8 L368.0 286.2 L367.0 287.4 L366.0 286.6 L365.0 286.7 L364.0 287.3 L363.0 286.2 L362.0 287.7 L361.0 286.7 L360.0 287.3 L359.0 286.6 L358.0 286.2 L357.0 286.2 L356.0 286.6 L355.0 287.4 L354.0 287.8 L353.0 294.7 L352.0 286.6 L351.0 287.1 L350.0 285.6 L349.0 286.2 L348.0 286.6 L347.0 286.2 L346.0 287.5 L345.0 286.6 L344.0 287.0 L343.0 287.8 L342.0 287.3 L341.0 288.5 L340.0 288.3 L339.0 291.9 L338.0 290.8 L337.0 292.7 L336.0 290.1 L335.0 288.9 L334.0 292.9 L333.0 291.0 L332.0 293.6 L331.0 299.0 L330.0 296.1 L329.0 288.9 L328.0 289.9 L327.0 290.1 L326.0 291.5 L325.0 292.3 L324.0 293.9 L323.0 295.8 L322.0 291.0 L321.0 294.7 L320.0 292.6 L319.0 292.3 L318.0 292.6 L317.0 289.8 L316.0 293.5 L315.0 293.7 L314.0 292.2 L313.0 290.5 L312.0 289.6 L311.0 291.1 L310.0 290.5 L309.0 289.4 L308.0 291.8 L307.0 289.4 L306.0 294.8 L305.0 291.1 L304.0 296.3 L303.0 293.0 L302.0 289.7 L301.0 291.0 L300.0 288.7 L299.0 291.2 L298.0 288.2 L297.0 292.2 L296.0 292.4 L295.0 292.5 L294.0 291.4 L293.0 291.3 L292.0 288.9 L291.0 290.2 L290.0 287.7Z" fill="#f07fb0"/></svg>
<div class="a" style="left:290px;top:318px;width:88px;height:19px;background:#80fcd0;border-radius:0 0 3px 3px;"></div>
<div class="t" style="left:296.00px;top:323px;font-size:11px;color:#111;letter-spacing:0.450px;">Beat 001</div>
<div class="a" style="left:0px;top:343px;width:281px;height:20px;background:#0a0a0a;"></div>
<div class="a" style="left:0px;top:343px;width:19px;height:20px;background:#3b3b3b;border-radius:0 3px 3px 0;"></div>
<div class="t" style="left:6.50px;top:348px;font-size:11px;color:#e6e6e6;">A</div>
<div class="a" style="left:118px;top:343px;width:12px;height:20px;background:#4b8a72;"></div>
<div class="a" style="left:229px;top:343px;width:19px;height:20px;background:#3b3b3b;border-radius:3px;"></div>
<div class="t" style="left:234.00px;top:348px;font-size:11px;color:#e6e6e6;">B</div>
<div class="a" style="left:249px;top:343px;width:32px;height:20px;background:#3b3b3b;border-radius:3px;"></div>
<svg class="a" style="left:255px;top:351px" width="21" height="7" viewBox="0 0 21 7"><path d="M0 0H2V7H0Z M2 3.5L7 0V7Z M13 0L18 3.5L13 7Z M18 0H20V7H18Z" fill="#e6e6e6"/></svg>
<div class="a" style="left:290px;top:343px;width:50px;height:20px;background:#80fcd0;border-radius:3px;"></div>
<div class="t" style="left:308.01px;top:348px;font-size:11px;color:#111;letter-spacing:0.450px;">AV</div>
<div class="a" style="left:341px;top:343px;width:30px;height:20px;background:#3b3b3b;border-radius:3px;"></div>
<div class="a" style="left:0px;top:366px;width:358px;height:36px;background:#2c2c2c;"></div>
<div class="a" style="left:37px;top:366px;width:1px;height:36px;background:#161616;"></div>
<div class="a" style="left:136px;top:366px;width:1px;height:36px;background:#161616;"></div>
<div class="a" style="left:173px;top:366px;width:1px;height:36px;background:#161616;"></div>
<div class="a" style="left:210px;top:366px;width:1px;height:36px;background:#161616;"></div>
<div class="a" style="left:247px;top:366px;width:1px;height:36px;background:#161616;"></div>
<div class="a" style="left:284px;top:366px;width:1px;height:36px;background:#161616;"></div>
<div class="a" style="left:321px;top:366px;width:1px;height:36px;background:#161616;"></div>
<div class="a" style="left:9px;top:375px;width:19px;height:18px;background:#4b8a72;"></div>
<div class="a" style="left:9px;top:375px;width:9px;height:9px;background:#80fcd0;"></div>
<div class="t" style="left:50.00px;top:379px;font-size:12px;color:#e6e6e6;letter-spacing:0.230px;">BPM  128.00</div>
<div class="t" style="left:152.50px;top:379px;font-size:12px;color:#e6e6e6;">-</div>
<div class="t" style="left:188.00px;top:379px;font-size:12px;color:#e6e6e6;">+</div>
<div class="t" style="left:224.00px;top:379px;font-size:12px;color:#e6e6e6;">-|</div>
<div class="t" style="left:259.44px;top:379px;font-size:12px;color:#e6e6e6;">|+</div>
<div class="t" style="left:296.33px;top:379px;font-size:12px;color:#e6e6e6;">/2</div>
<div class="t" style="left:333.17px;top:379px;font-size:12px;color:#e6e6e6;">*2</div>
<div class="a" style="left:0px;top:405px;width:358px;height:21px;background:#2c2c2c;"></div>
<div class="t" style="left:198.50px;top:410px;font-size:11px;color:#d8d8d8;letter-spacing:0.377px;">Output Monitor</div>
<div class="a" style="left:0px;top:426px;width:358px;height:20px;background:#0c0c0c;"></div>
<div class="t" style="left:10.00px;top:431px;font-size:11px;color:#e6e6e6;letter-spacing:0.531px;">Output Monitor</div>
<div class="a" style="left:2px;top:446px;width:356px;height:266px;background:#000;"></div>
<div class="a" style="left:2px;top:712px;width:473px;height:22px;background:#161616;"></div>
<div class="t" style="left:10.00px;top:716px;font-size:12px;color:#eaeaea;letter-spacing:1.283px;">Preview Monitor</div>
<div class="a" style="left:2px;top:734px;width:473px;height:266px;background:conic-gradient(#404040 0 25%,#000 0 50%,#404040 0 75%,#000 0) 0 0/16px 16px"></div>
<div class="a" style="left:2px;top:1000px;width:473px;height:15px;background:#161616;"></div>
<div class="a" style="left:0px;top:440px;width:2px;height:577px;background:#111;"></div>
<div class="a" style="left:0px;top:1017px;width:1920px;height:23px;background:#2a2a2a;"></div>
<div class="t" style="left:10.00px;top:1023px;font-size:11px;color:#e6e6e6;letter-spacing:-0.018px;">Resolume Arena 6.0.0</div>
<div class="t" style="left:1882.00px;top:1023px;font-size:11px;color:#e6e6e6;letter-spacing:0.398px;">09:17</div>
<div class="a" style="left:475px;top:866px;width:5px;height:151px;background:#0a0a0a;"></div>
<div class="a" style="left:480px;top:866px;width:466px;height:150px;background:#000;"></div>
<div class="a" style="left:480px;top:871px;width:466px;height:23px;background:#2a5445;"></div>
<svg class="a" style="left:488px;top:878px" width="6" height="9" viewBox="0 0 6 9"><path d="M0 0.5L6 4.5L0 8.5Z" fill="#8a8a8a"/></svg>
<div class="t" style="left:501.50px;top:877px;font-size:11px;color:#e6e6e6;letter-spacing:0.450px;">Wave Warp</div>
<div class="a" style="left:597px;top:871px;width:251px;height:23px;background:#38705b;"></div>
<div class="a" style="left:597px;top:873px;width:248px;height:19px;background:#2a2a2a;"></div>
<div class="a" style="left:841px;top:873px;width:4px;height:19px;background:#4f9a7e;"></div>
<div class="a" style="left:849px;top:871px;width:1px;height:23px;background:#000;"></div>
<div class="t" style="left:858.00px;top:877px;font-size:11px;color:#eee;">B</div>
<div class="a" style="left:873px;top:871px;width:1px;height:23px;background:#000;"></div>
<div class="t" style="left:881.04px;top:877px;font-size:11px;color:#eee;">P.</div>
<div class="a" style="left:897px;top:871px;width:1px;height:23px;background:#000;"></div>
<svg class="a" style="left:904px;top:878px" width="10" height="9" viewBox="0 0 10 9"><path d="M0.5 0.5L9.5 8.5M9.5 0.5L0.5 8.5" stroke="#eee" stroke-width="1.2"/></svg>
<div class="a" style="left:920px;top:871px;width:1px;height:23px;background:#000;"></div>
<svg class="a" style="left:928px;top:878px" width="10" height="11" viewBox="0 0 10 11"><path d="M0 1.5H10M0 5.5H10M0 9.5H10" stroke="#eee" stroke-width="1"/></svg>
<div class="a" style="left:480px;top:895px;width:466px;height:23px;background:#2a5445;"></div>
<svg class="a" style="left:488px;top:902px" width="6" height="9" viewBox="0 0 6 9"><path d="M0 0.5L6 4.5L0 8.5Z" fill="#8a8a8a"/></svg>
<div class="t" style="left:501.50px;top:901px;font-size:11px;color:#e6e6e6;letter-spacing:0.450px;">Flip</div>
<div class="a" style="left:597px;top:895px;width:251px;height:23px;background:#38705b;"></div>
<div class="a" style="left:601px;top:897px;width:244px;height:19px;background:#000;"></div>
<div class="a" style="left:601px;top:897px;width:244px;height:19px;background:conic-gradient(#3a3a3a 0 25%,#000 0 50%,#3a3a3a 0 75%,#000 0) 0 0/8px 8px;-webkit-mask-image:linear-gradient(90deg,#000,rgba(0,0,0,0.05));mask-image:linear-gradient(90deg,#000,rgba(0,0,0,0.05))"></div>
<div class="a" style="left:597px;top:897px;width:4px;height:19px;background:#4f9a7e;"></div>
<div class="a" style="left:849px;top:895px;width:1px;height:23px;background:#000;"></div>
<div class="t" style="left:858.00px;top:901px;font-size:11px;color:#eee;">B</div>
<div class="a" style="left:873px;top:895px;width:1px;height:23px;background:#000;"></div>
<div class="t" style="left:881.04px;top:901px;font-size:11px;color:#eee;">P.</div>
<div class="a" style="left:897px;top:895px;width:1px;height:23px;background:#000;"></div>
<svg class="a" style="left:904px;top:902px" width="10" height="9" viewBox="0 0 10 9"><path d="M0.5 0.5L9.5 8.5M9.5 0.5L0.5 8.5" stroke="#eee" stroke-width="1.2"/></svg>
<div class="a" style="left:920px;top:895px;width:1px;height:23px;background:#000;"></div>
<svg class="a" style="left:928px;top:902px" width="10" height="11" viewBox="0 0 10 11"><path d="M0 1.5H10M0 5.5H10M0 9.5H10" stroke="#eee" stroke-width="1"/></svg>
<div class="a" style="left:480px;top:919px;width:466px;height:23px;background:#2a5445;"></div>
<svg class="a" style="left:488px;top:926px" width="6" height="9" viewBox="0 0 6 9"><path d="M0 0.5L6 4.5L0 8.5Z" fill="#8a8a8a"/></svg>
<div class="t" style="left:501.50px;top:925px;font-size:11px;color:#e6e6e6;letter-spacing:0.450px;">PolarKaleido</div>
<div class="a" style="left:597px;top:919px;width:251px;height:23px;background:#38705b;"></div>
<div class="a" style="left:601px;top:921px;width:244px;height:19px;background:#000;"></div>
<div class="a" style="left:601px;top:921px;width:244px;height:19px;background:conic-gradient(#3a3a3a 0 25%,#000 0 50%,#3a3a3a 0 75%,#000 0) 0 0/8px 8px;-webkit-mask-image:linear-gradient(90deg,#000,rgba(0,0,0,0.05));mask-image:linear-gradient(90deg,#000,rgba(0,0,0,0.05))"></div>
<div class="a" style="left:597px;top:921px;width:4px;height:19px;background:#4f9a7e;"></div>
<div class="a" style="left:849px;top:919px;width:1px;height:23px;background:#000;"></div>
<div class="t" style="left:858.00px;top:925px;font-size:11px;color:#eee;">B</div>
<div class="a" style="left:873px;top:919px;width:1px;height:23px;background:#000;"></div>
<div class="t" style="left:881.04px;top:925px;font-size:11px;color:#eee;">P.</div>
<div class="a" style="left:897px;top:919px;width:1px;height:23px;background:#000;"></div>
<svg class="a" style="left:904px;top:926px" width="10" height="9" viewBox="0 0 10 9"><path d="M0.5 0.5L9.5 8.5M9.5 0.5L0.5 8.5" stroke="#eee" stroke-width="1.2"/></svg>
<div class="a" style="left:920px;top:919px;width:1px;height:23px;background:#000;"></div>
<svg class="a" style="left:928px;top:926px" width="10" height="11" viewBox="0 0 10 11"><path d="M0 1.5H10M0 5.5H10M0 9.5H10" stroke="#eee" stroke-width="1"/></svg>
<div class="a" style="left:480px;top:943px;width:466px;height:23px;background:#2a5445;"></div>
<svg class="a" style="left:488px;top:950px" width="6" height="9" viewBox="0 0 6 9"><path d="M0 0.5L6 4.5L0 8.5Z" fill="#8a8a8a"/></svg>
<div class="t" style="left:501.50px;top:949px;font-size:11px;color:#e6e6e6;letter-spacing:0.450px;">Mirror Quad</div>
<div class="a" style="left:597px;top:943px;width:251px;height:23px;background:#38705b;"></div>
<div class="a" style="left:601px;top:945px;width:244px;height:19px;background:#000;"></div>
<div class="a" style="left:601px;top:945px;width:244px;height:19px;background:conic-gradient(#3a3a3a 0 25%,#000 0 50%,#3a3a3a 0 75%,#000 0) 0 0/8px 8px;-webkit-mask-image:linear-gradient(90deg,#000,rgba(0,0,0,0.05));mask-image:linear-gradient(90deg,#000,rgba(0,0,0,0.05))"></div>
<div class="a" style="left:597px;top:945px;width:4px;height:19px;background:#4f9a7e;"></div>
<div class="a" style="left:849px;top:943px;width:1px;height:23px;background:#000;"></div>
<div class="t" style="left:858.00px;top:949px;font-size:11px;color:#eee;">B</div>
<div class="a" style="left:873px;top:943px;width:1px;height:23px;background:#000;"></div>
<div class="t" style="left:881.04px;top:949px;font-size:11px;color:#eee;">P.</div>
<div class="a" style="left:897px;top:943px;width:1px;height:23px;background:#000;"></div>
<svg class="a" style="left:904px;top:950px" width="10" height="9" viewBox="0 0 10 9"><path d="M0.5 0.5L9.5 8.5M9.5 0.5L0.5 8.5" stroke="#eee" stroke-width="1.2"/></svg>
<div class="a" style="left:920px;top:943px;width:1px;height:23px;background:#000;"></div>
<svg class="a" style="left:928px;top:950px" width="10" height="11" viewBox="0 0 10 11"><path d="M0 1.5H10M0 5.5H10M0 9.5H10" stroke="#eee" stroke-width="1"/></svg>
<div class="a" style="left:480px;top:967px;width:466px;height:23px;background:#2a5445;"></div>
<svg class="a" style="left:488px;top:974px" width="6" height="9" viewBox="0 0 6 9"><path d="M0 0.5L6 4.5L0 8.5Z" fill="#8a8a8a"/></svg>
<div class="t" style="left:501.50px;top:973px;font-size:11px;color:#e6e6e6;letter-spacing:0.450px;">Twitch</div>
<div class="a" style="left:597px;top:967px;width:251px;height:23px;background:#38705b;"></div>
<div class="a" style="left:597px;top:969px;width:248px;height:19px;background:#2a2a2a;"></div>
<div class="a" style="left:841px;top:969px;width:4px;height:19px;background:#4f9a7e;"></div>
<div class="a" style="left:849px;top:967px;width:1px;height:23px;background:#000;"></div>
<div class="t" style="left:858.00px;top:973px;font-size:11px;color:#eee;">B</div>
<div class="a" style="left:873px;top:967px;width:1px;height:23px;background:#000;"></div>
<div class="t" style="left:881.04px;top:973px;font-size:11px;color:#eee;">P.</div>
<div class="a" style="left:897px;top:967px;width:1px;height:23px;background:#000;"></div>
<svg class="a" style="left:904px;top:974px" width="10" height="9" viewBox="0 0 10 9"><path d="M0.5 0.5L9.5 8.5M9.5 0.5L0.5 8.5" stroke="#eee" stroke-width="1.2"/></svg>
<div class="a" style="left:920px;top:967px;width:1px;height:23px;background:#000;"></div>
<svg class="a" style="left:928px;top:974px" width="10" height="11" viewBox="0 0 10 11"><path d="M0 1.5H10M0 5.5H10M0 9.5H10" stroke="#eee" stroke-width="1"/></svg>
<div class="a" style="left:480px;top:991px;width:466px;height:23px;background:#2a5445;"></div>
<svg class="a" style="left:488px;top:998px" width="6" height="9" viewBox="0 0 6 9"><path d="M0 0.5L6 4.5L0 8.5Z" fill="#8a8a8a"/></svg>
<div class="t" style="left:501.50px;top:997px;font-size:11px;color:#e6e6e6;letter-spacing:0.450px;">Trails</div>
<div class="a" style="left:597px;top:991px;width:251px;height:23px;background:#38705b;"></div>
<div class="a" style="left:597px;top:993px;width:248px;height:19px;background:#2a2a2a;"></div>
<div class="a" style="left:841px;top:993px;width:4px;height:19px;background:#4f9a7e;"></div>
<div class="a" style="left:849px;top:991px;width:1px;height:23px;background:#000;"></div>
<div class="t" style="left:858.00px;top:997px;font-size:11px;color:#eee;">B</div>
<div class="a" style="left:873px;top:991px;width:1px;height:23px;background:#000;"></div>
<div class="t" style="left:881.04px;top:997px;font-size:11px;color:#eee;">P.</div>
<div class="a" style="left:897px;top:991px;width:1px;height:23px;background:#000;"></div>
<svg class="a" style="left:904px;top:998px" width="10" height="9" viewBox="0 0 10 9"><path d="M0.5 0.5L9.5 8.5M9.5 0.5L0.5 8.5" stroke="#eee" stroke-width="1.2"/></svg>
<div class="a" style="left:920px;top:991px;width:1px;height:23px;background:#000;"></div>
<svg class="a" style="left:928px;top:998px" width="10" height="11" viewBox="0 0 10 11"><path d="M0 1.5H10M0 5.5H10M0 9.5H10" stroke="#eee" stroke-width="1"/></svg>
<div class="a" style="left:946px;top:866px;width:11px;height:150px;background:#222;"></div>
<div class="a" style="left:946px;top:866px;width:11px;height:40px;background:#3a3a3a;"></div>
<div class="a" style="left:957px;top:866px;width:3px;height:151px;background:#000;"></div>
<div class="a" style="left:960px;top:866px;width:477px;height:151px;background:#0c0c0c;"></div>
<div class="a" style="left:960px;top:871px;width:477px;height:23px;background:#161514;"></div>
<div class="a" style="left:1046px;top:871px;width:1px;height:23px;background:#0a0a0a;"></div>
<div class="t" style="left:988.50px;top:877px;font-size:11px;color:#e6e6e6;letter-spacing:0.090px;">Position X</div>
<div class="a" style="left:1113px;top:883px;width:4px;height:1px;background:#e6e6e6;"></div>
<svg class="a" style="left:1133px;top:881px" width="7" height="7" viewBox="0 0 7 7"><path d="M3.5 0V7M0 3.5H7" stroke="#e6e6e6" stroke-width="1.1"/></svg>
<div class="t" style="left:1052.50px;top:877px;font-size:11px;color:#e6e6e6;letter-spacing:0.450px;">0</div>
<div class="a" style="left:960px;top:894px;width:477px;height:1px;background:#0a0a0a;"></div>
<div class="a" style="left:960px;top:895px;width:477px;height:23px;background:#161514;"></div>
<div class="a" style="left:1046px;top:895px;width:1px;height:23px;background:#0a0a0a;"></div>
<div class="t" style="left:988.50px;top:901px;font-size:11px;color:#e6e6e6;letter-spacing:0.090px;">Position Y</div>
<div class="a" style="left:1113px;top:907px;width:4px;height:1px;background:#e6e6e6;"></div>
<svg class="a" style="left:1133px;top:905px" width="7" height="7" viewBox="0 0 7 7"><path d="M3.5 0V7M0 3.5H7" stroke="#e6e6e6" stroke-width="1.1"/></svg>
<div class="t" style="left:1052.50px;top:901px;font-size:11px;color:#e6e6e6;letter-spacing:0.450px;">0</div>
<div class="a" style="left:960px;top:918px;width:477px;height:1px;background:#0a0a0a;"></div>
<div class="a" style="left:960px;top:919px;width:477px;height:23px;background:#161514;"></div>
<div class="a" style="left:1046px;top:919px;width:1px;height:23px;background:#0a0a0a;"></div>
<svg class="a" style="left:968px;top:926px" width="6" height="9" viewBox="0 0 6 9"><path d="M0 0.5L6 4.5L0 8.5Z" fill="#8a8a8a"/></svg>
<div class="t" style="left:981.00px;top:925px;font-size:11px;color:#e6e6e6;letter-spacing:0.450px;">Scale</div>
<div class="a" style="left:1103px;top:922px;width:327px;height:17px;background:#0a0a0a;"></div>
<div class="a" style="left:1103px;top:922px;width:32px;height:17px;background:#2e2e2e;"></div>
<div class="a" style="left:1135px;top:922px;width:4px;height:17px;background:#4b8a72;"></div>
<div class="t" style="left:1052.50px;top:925px;font-size:11px;color:#e6e6e6;letter-spacing:0.450px;">100 %</div>
<div class="a" style="left:960px;top:942px;width:477px;height:1px;background:#0a0a0a;"></div>
<div class="a" style="left:960px;top:943px;width:477px;height:23px;background:#161514;"></div>
<div class="a" style="left:1046px;top:943px;width:1px;height:23px;background:#0a0a0a;"></div>
<svg class="a" style="left:968px;top:950px" width="6" height="9" viewBox="0 0 6 9"><path d="M0 0.5L6 4.5L0 8.5Z" fill="#8a8a8a"/></svg>
<div class="t" style="left:981.00px;top:949px;font-size:11px;color:#e6e6e6;letter-spacing:0.450px;">Rotation</div>
<div class="a" style="left:1103px;top:946px;width:327px;height:17px;background:#0a0a0a;"></div>
<div class="a" style="left:1264px;top:946px;width:4px;height:17px;background:#4b8a72;"></div>
<div class="t" style="left:1052.50px;top:949px;font-size:11px;color:#e6e6e6;letter-spacing:0.450px;">0 °</div>
<div class="a" style="left:960px;top:966px;width:477px;height:1px;background:#0a0a0a;"></div>
<div class="a" style="left:960px;top:967px;width:477px;height:23px;background:#161514;"></div>
<div class="a" style="left:1046px;top:967px;width:1px;height:23px;background:#0a0a0a;"></div>
<svg class="a" style="left:968px;top:974px" width="6" height="9" viewBox="0 0 6 9"><path d="M0 0.5L6 4.5L0 8.5Z" fill="#8a8a8a"/></svg>
<div class="t" style="left:981.00px;top:973px;font-size:11px;color:#e6e6e6;letter-spacing:0.450px;">Anchor</div>
<div class="a" style="left:1103px;top:970px;width:327px;height:17px;background:#0a0a0a;"></div>
<div class="a" style="left:1264px;top:970px;width:4px;height:17px;background:#4b8a72;"></div>
<div class="t" style="left:1052.50px;top:973px;font-size:11px;color:#e6e6e6;letter-spacing:0.450px;">0</div>
<div class="a" style="left:960px;top:990px;width:477px;height:1px;background:#0a0a0a;"></div>
<div class="t" style="left:1071.50px;top:998px;font-size:11px;color:#303030;letter-spacing:0.556px;">Drop audio, video, mask, source or effect here.</div>
<div class="a" style="left:1437px;top:866px;width:3px;height:151px;background:#000;"></div>
<div class="a" style="left:1440px;top:866px;width:480px;height:48px;background:#0a0a0a;"></div>
<div class="t" style="left:1456.00px;top:891px;font-size:11px;color:#e6e6e6;letter-spacing:0.629px;">Distortion</div>
<div class="a" style="left:1440px;top:916px;width:480px;height:20px;background:#2c2c2c;"></div>
<div class="t" style="left:1447.00px;top:921px;font-size:11px;color:#e6e6e6;letter-spacing:0.498px;">Help</div>
<svg class="a" style="left:1902px;top:922px" width="8" height="8" viewBox="0 0 8 8"><path d="M0.5 0.5L7.5 7.5M7.5 0.5L0.5 7.5" stroke="#eee" stroke-width="1.2"/></svg>
<div class="a" style="left:1440px;top:936px;width:480px;height:81px;background:#0a0a0a;"></div>
<div class="t" style="left:1447.00px;top:941px;font-size:11px;color:#d8d8d8;letter-spacing:0.170px;">Move your mouse over the interface element that you would like more info about.</div>
<div class="a" style="left:360px;top:366px;width:1560px;height:36px;background:#2a2a2a;"></div>
<div class="a" style="left:1830px;top:366px;width:1px;height:36px;background:#111;"></div>
<div class="a" style="left:1844px;top:380px;width:7px;height:7px;border-radius:50%;background:#fff"></div>
<div class="t" style="left:1853.50px;top:379px;font-size:11px;color:#eee;letter-spacing:-0.545px;">RECORD</div>
<div class="a" style="left:1560px;top:405px;width:356px;height:22px;background:#111;"></div>
<div class="a" style="left:1678px;top:405px;width:118px;height:22px;background:#2e2e2e;border-radius:3px 3px 0 0;"></div>
<div class="t" style="left:1582.50px;top:410px;font-size:11px;color:#e0e0e0;letter-spacing:0.260px;">Compositions</div>
<div class="t" style="left:1719.50px;top:410px;font-size:11px;color:#e0e0e0;letter-spacing:0.013px;">Effects</div>
<div class="t" style="left:1835.00px;top:410px;font-size:11px;color:#e0e0e0;letter-spacing:0.024px;">Sources</div>
<div class="a" style="left:1560px;top:427px;width:356px;height:35px;background:#1a1a1a;"></div>
<div class="a" style="left:1540px;top:436px;width:135px;height:17px;background:#80fcd0;border-radius:3px 0 0 3px;"></div>
<div class="a" style="left:1675px;top:436px;width:171px;height:17px;background:#3a3a3a;border-radius:0 3px 3px 0;"></div>
<div class="t" style="left:1564.00px;top:440px;font-size:9.5px;color:#1a1a1a;letter-spacing:-0.261px;">Video | FFGL</div>
<div class="t" style="left:1735.00px;top:440px;font-size:9.5px;color:#e6e6e6;letter-spacing:-0.172px;">Audio | VST</div>
<div class="a" style="left:1560px;top:462px;width:356px;height:1px;background:#111;"></div>
<div class="a" style="left:1560px;top:463px;width:356px;height:35px;background:#2e2e2e;"></div>
<div class="a" style="left:1540px;top:470px;width:364px;height:21px;background:#000;border-radius:4px;"></div>
<svg class="a" style="left:1889px;top:477px" width="8" height="8" viewBox="0 0 8 8"><path d="M0.5 0.5L7.5 7.5M7.5 0.5L0.5 7.5" stroke="#eee" stroke-width="1.2"/></svg>
<div class="a" style="left:1560px;top:498px;width:346px;height:414px;background:#0c0c0c;"></div>
<div class="a" style="left:1560px;top:547px;width:346px;height:24px;background:#2e2e2e;"></div>
<div class="a" style="left:1906px;top:498px;width:11px;height:414px;background:#222;"></div>
<div class="a" style="left:1906px;top:498px;width:11px;height:86px;background:#333;"></div>
<div class="a" style="left:1916px;top:405px;width:4px;height:511px;background:#111;"></div>
<div class="a" style="left:359px;top:181px;width:1202px;height:701px;background:#4a4a4a;"></div>
<div class="a" style="left:360px;top:151px;width:1200px;height:30px;background:#fff;"></div>
<svg class="a" style="left:369px;top:157px" width="14" height="16" viewBox="0 0 14 16"><path d="M13.5 0 C8 0.3 1 4 0.3 10 C0 13.5 2.5 16 6.3 16 C10 16 13 13.6 13 10.3 C13 7.3 10.8 5.6 8.3 5.6 C7 5.6 6 6 5.3 6.5 C6.3 3.8 9 2 12 1.6 Z" fill="#7ce8c0"/><circle cx="6.5" cy="10.6" r="1.4" fill="#fff"/></svg>
<div class="t" style="left:389.50px;top:160px;font-size:12px;color:#8a8a8a;letter-spacing:-0.258px;">Fixture Editor</div>
<div class="a" style="left:1441px;top:165px;width:10px;height:1px;background:#6a6a6a;"></div>
<div class="a" style="left:1486px;top:160px;width:10px;height:10px;border:1px solid #6a6a6a"></div>
<svg class="a" style="left:1532px;top:160px" width="10" height="10" viewBox="0 0 10 10"><path d="M0.5 0.5L9.5 9.5M9.5 0.5L0.5 9.5" stroke="#6a6a6a" stroke-width="1.0"/></svg>
<div class="a" style="left:360px;top:181px;width:1200px;height:700px;background:#0f0f0f;"></div>
<div class="a" style="left:376px;top:197px;width:256px;height:24px;background:#47534f;"></div>
<div class="t" style="left:381.00px;top:204px;font-size:12px;color:#eaeaea;letter-spacing:0.904px;">Fixtures</div>
<div class="a" style="left:376px;top:221px;width:256px;height:620px;background:#282828;"></div>
<div class="a" style="left:376px;top:221px;width:256px;height:1px;background:#000;"></div>
<div class="a" style="left:376px;top:222px;width:256px;height:24px;background:#80fcd0;"></div>
<div class="t" style="left:381.00px;top:229px;font-size:12px;color:#111;letter-spacing:0.630px;">LED 16</div>
<div class="a" style="left:648px;top:197px;width:256px;height:24px;background:#47534f;"></div>
<div class="t" style="left:653.00px;top:204px;font-size:12px;color:#eaeaea;letter-spacing:0.939px;">Fixture Parameters</div>
<div class="a" style="left:648px;top:221px;width:256px;height:620px;background:#282828;"></div>
<div class="a" style="left:648px;top:221px;width:256px;height:1px;background:#000;"></div>
<div class="a" style="left:648px;top:222px;width:256px;height:23px;background:#464646;"></div>
<div class="t" style="left:654.00px;top:228px;font-size:11px;color:#e6e6e6;letter-spacing:0.198px;">1 - 48</div>
<div class="t" style="left:694.00px;top:228px;font-size:11px;color:#e6e6e6;letter-spacing:-0.068px;">Pixels</div>
<svg class="a" style="left:888px;top:229px" width="9" height="9" viewBox="0 0 9 9"><path d="M0 1.5H9M0 4.5H9M0 7.5H9" stroke="#eee" stroke-width="1"/></svg>
<div class="a" style="left:648px;top:245px;width:256px;height:133px;background:#0a0a0a;"></div>
<div class="a" style="left:648px;top:246px;width:86px;height:23px;background:#161514;"></div>
<div class="a" style="left:735px;top:246px;width:169px;height:23px;background:#161514;"></div>
<div class="t" style="left:697.50px;top:252px;font-size:11px;color:#e6e6e6;letter-spacing:0.500px;">Width</div>
<div class="t" style="left:741.50px;top:252px;font-size:11px;color:#e6e6e6;letter-spacing:0.450px;">16</div>
<div class="a" style="left:800px;top:258px;width:4px;height:1px;background:#e6e6e6;"></div>
<svg class="a" style="left:821px;top:254px" width="7" height="7" viewBox="0 0 7 7"><path d="M3.5 0V7M0 3.5H7" stroke="#e6e6e6" stroke-width="1.1"/></svg>
<div class="a" style="left:648px;top:270px;width:86px;height:23px;background:#161514;"></div>
<div class="a" style="left:735px;top:270px;width:169px;height:23px;background:#161514;"></div>
<div class="t" style="left:693.50px;top:276px;font-size:11px;color:#e6e6e6;letter-spacing:0.452px;">Height</div>
<div class="t" style="left:741.50px;top:276px;font-size:11px;color:#e6e6e6;letter-spacing:0.450px;">1</div>
<div class="a" style="left:800px;top:282px;width:4px;height:1px;background:#e6e6e6;"></div>
<svg class="a" style="left:821px;top:278px" width="7" height="7" viewBox="0 0 7 7"><path d="M3.5 0V7M0 3.5H7" stroke="#e6e6e6" stroke-width="1.1"/></svg>
<div class="a" style="left:648px;top:294px;width:86px;height:23px;background:#161514;"></div>
<div class="a" style="left:735px;top:294px;width:169px;height:23px;background:#161514;"></div>
<div class="t" style="left:668.00px;top:300px;font-size:11px;color:#e6e6e6;letter-spacing:-0.091px;">Color Space</div>
<div class="t" style="left:741.50px;top:301px;font-size:11px;color:#e6e6e6;letter-spacing:0.450px;">RGB</div>
<div class="a" style="left:648px;top:318px;width:86px;height:23px;background:#161514;"></div>
<div class="a" style="left:735px;top:318px;width:169px;height:23px;background:#161514;"></div>
<div class="t" style="left:686.50px;top:324px;font-size:11px;color:#e6e6e6;letter-spacing:0.250px;">Gamma</div>
<div class="t" style="left:741.50px;top:324px;font-size:11px;color:#e6e6e6;letter-spacing:0.450px;">2.50</div>
<div class="a" style="left:648px;top:342px;width:86px;height:35px;background:#161514;"></div>
<div class="a" style="left:735px;top:342px;width:169px;height:35px;background:#161514;"></div>
<div class="t" style="left:668.50px;top:348px;font-size:11px;color:#e6e6e6;letter-spacing:0.372px;">Distribution</div>
<svg class="a" style="left:796px;top:303px" width="8" height="4" viewBox="0 0 8 4"><path d="M0 0H8L4 4Z" fill="#eee"/></svg>
<div class="a" style="left:791px;top:321px;width:106px;height:17px;background:#0a0a0a;"></div>
<div class="a" style="left:791px;top:321px;width:76px;height:17px;background:#2e2e2e;"></div>
<div class="a" style="left:867px;top:321px;width:4px;height:17px;background:#4b8a72;"></div>
<svg class="a" style="left:742px;top:355px" width="23" height="10" viewBox="0 0 23 10"><path d="M1 1H8L12 4.5L8 8H1Z" fill="none" stroke="#80fcd0" stroke-width="2"/><rect x="13" y="0" width="9" height="9" fill="#80fcd0"/></svg>
<svg class="a" style="left:784px;top:355px" width="23" height="10" viewBox="0 0 23 10"><rect x="0" y="0" width="9" height="9" fill="#6a6a6a"/><path d="M21 1H14L10 4.5L14 8H21Z" fill="none" stroke="#6a6a6a" stroke-width="2"/></svg>
<div class="a" style="left:920px;top:197px;width:624px;height:24px;background:#47534f;"></div>
<div class="t" style="left:925.00px;top:204px;font-size:12px;color:#eaeaea;letter-spacing:0.598px;">Pixels</div>
<div class="a" style="left:920px;top:222px;width:624px;height:619px;background:#282828;"></div>
<div class="a" style="left:920px;top:221px;width:624px;height:1px;background:#000;"></div>
<div class="a" style="left:928px;top:512px;width:609px;height:39px;background:#9a8c8c;"></div>
<div class="a" style="left:929px;top:513px;width:37px;height:37px;background:#4a8770;"></div>
<div class="t" style="left:945.00px;top:518px;font-size:9px;color:#f0f0f0;">1</div>
<div class="t" style="left:945.00px;top:528px;font-size:9px;color:#f0f0f0;">2</div>
<div class="t" style="left:945.00px;top:538px;font-size:9px;color:#f0f0f0;">3</div>
<div class="a" style="left:967px;top:513px;width:37px;height:37px;background:#4a8770;"></div>
<div class="t" style="left:983.00px;top:518px;font-size:9px;color:#f0f0f0;">4</div>
<div class="t" style="left:983.00px;top:528px;font-size:9px;color:#f0f0f0;">5</div>
<div class="t" style="left:983.00px;top:538px;font-size:9px;color:#f0f0f0;">6</div>
<div class="a" style="left:1005px;top:513px;width:37px;height:37px;background:#4a8770;"></div>
<div class="t" style="left:1021.00px;top:518px;font-size:9px;color:#f0f0f0;">7</div>
<div class="t" style="left:1021.00px;top:528px;font-size:9px;color:#f0f0f0;">8</div>
<div class="t" style="left:1021.00px;top:538px;font-size:9px;color:#f0f0f0;">9</div>
<div class="a" style="left:1043px;top:513px;width:37px;height:37px;background:#4a8770;"></div>
<div class="t" style="left:1056.50px;top:518px;font-size:9px;color:#f0f0f0;">10</div>
<div class="t" style="left:1056.83px;top:528px;font-size:9px;color:#f0f0f0;">11</div>
<div class="t" style="left:1056.50px;top:538px;font-size:9px;color:#f0f0f0;">12</div>
<div class="a" style="left:1081px;top:513px;width:37px;height:37px;background:#4a8770;"></div>
<div class="t" style="left:1094.50px;top:518px;font-size:9px;color:#f0f0f0;">13</div>
<div class="t" style="left:1094.50px;top:528px;font-size:9px;color:#f0f0f0;">14</div>
<div class="t" style="left:1094.50px;top:538px;font-size:9px;color:#f0f0f0;">15</div>
<div class="a" style="left:1119px;top:513px;width:37px;height:37px;background:#4a8770;"></div>
<div class="t" style="left:1132.50px;top:518px;font-size:9px;color:#f0f0f0;">16</div>
<div class="t" style="left:1132.50px;top:528px;font-size:9px;color:#f0f0f0;">17</div>
<div class="t" style="left:1132.50px;top:538px;font-size:9px;color:#f0f0f0;">18</div>
<div class="a" style="left:1157px;top:513px;width:37px;height:37px;background:#4a8770;"></div>
<div class="t" style="left:1170.50px;top:518px;font-size:9px;color:#f0f0f0;">19</div>
<div class="t" style="left:1170.50px;top:528px;font-size:9px;color:#f0f0f0;">20</div>
<div class="t" style="left:1170.50px;top:538px;font-size:9px;color:#f0f0f0;">21</div>
<div class="a" style="left:1195px;top:513px;width:37px;height:37px;background:#4a8770;"></div>
<div class="t" style="left:1208.50px;top:518px;font-size:9px;color:#f0f0f0;">22</div>
<div class="t" style="left:1208.50px;top:528px;font-size:9px;color:#f0f0f0;">23</div>
<div class="t" style="left:1208.50px;top:538px;font-size:9px;color:#f0f0f0;">24</div>
<div class="a" style="left:1233px;top:513px;width:37px;height:37px;background:#4a8770;"></div>
<div class="t" style="left:1246.50px;top:518px;font-size:9px;color:#f0f0f0;">25</div>
<div class="t" style="left:1246.50px;top:528px;font-size:9px;color:#f0f0f0;">26</div>
<div class="t" style="left:1246.50px;top:538px;font-size:9px;color:#f0f0f0;">27</div>
<div class="a" style="left:1271px;top:513px;width:37px;height:37px;background:#4a8770;"></div>
<div class="t" style="left:1284.50px;top:518px;font-size:9px;color:#f0f0f0;">28</div>
<div class="t" style="left:1284.50px;top:528px;font-size:9px;color:#f0f0f0;">29</div>
<div class="t" style="left:1284.50px;top:538px;font-size:9px;color:#f0f0f0;">30</div>
<div class="a" style="left:1309px;top:513px;width:37px;height:37px;background:#4a8770;"></div>
<div class="t" style="left:1322.50px;top:518px;font-size:9px;color:#f0f0f0;">31</div>
<div class="t" style="left:1322.50px;top:528px;font-size:9px;color:#f0f0f0;">32</div>
<div class="t" style="left:1322.50px;top:538px;font-size:9px;color:#f0f0f0;">33</div>
<div class="a" style="left:1347px;top:513px;width:37px;height:37px;background:#4a8770;"></div>
<div class="t" style="left:1360.50px;top:518px;font-size:9px;color:#f0f0f0;">34</div>
<div class="t" style="left:1360.50px;top:528px;font-size:9px;color:#f0f0f0;">35</div>
<div class="t" style="left:1360.50px;top:538px;font-size:9px;color:#f0f0f0;">36</div>
<div class="a" style="left:1385px;top:513px;width:37px;height:37px;background:#4a8770;"></div>
<div class="t" style="left:1398.50px;top:518px;font-size:9px;color:#f0f0f0;">37</div>
<div class="t" style="left:1398.50px;top:528px;font-size:9px;color:#f0f0f0;">38</div>
<div class="t" style="left:1398.50px;top:538px;font-size:9px;color:#f0f0f0;">39</div>
<div class="a" style="left:1423px;top:513px;width:37px;height:37px;background:#4a8770;"></div>
<div class="t" style="left:1436.50px;top:518px;font-size:9px;color:#f0f0f0;">40</div>
<div class="t" style="left:1436.50px;top:528px;font-size:9px;color:#f0f0f0;">41</div>
<div class="t" style="left:1436.50px;top:538px;font-size:9px;color:#f0f0f0;">42</div>
<div class="a" style="left:1461px;top:513px;width:37px;height:37px;background:#4a8770;"></div>
<div class="t" style="left:1474.50px;top:518px;font-size:9px;color:#f0f0f0;">43</div>
<div class="t" style="left:1474.50px;top:528px;font-size:9px;color:#f0f0f0;">44</div>
<div class="t" style="left:1474.50px;top:538px;font-size:9px;color:#f0f0f0;">45</div>
<div class="a" style="left:1499px;top:513px;width:37px;height:37px;background:#4a8770;"></div>
<div class="t" style="left:1512.50px;top:518px;font-size:9px;color:#f0f0f0;">46</div>
<div class="t" style="left:1512.50px;top:528px;font-size:9px;color:#f0f0f0;">47</div>
<div class="t" style="left:1512.50px;top:538px;font-size:9px;color:#f0f0f0;">48</div>
<div class="a" style="left:592px;top:849px;width:40px;height:20px;background:#3b3b3b;border-radius:3px;"></div>
<svg class="a" style="left:599px;top:855px" width="8" height="8" viewBox="0 0 8 8"><path d="M4 0V8M0 4H8" stroke="#eee" stroke-width="1.1"/></svg>
<div class="a" style="left:618px;top:859px;width:3px;height:1px;background:#eee;"></div>
<div class="a" style="left:864px;top:849px;width:40px;height:20px;background:#3b3b3b;border-radius:3px;"></div>
<svg class="a" style="left:871px;top:855px" width="8" height="8" viewBox="0 0 8 8"><path d="M4 0V8M0 4H8" stroke="#eee" stroke-width="1.1"/></svg>
<div class="a" style="left:890px;top:859px;width:3px;height:1px;background:#eee;"></div>
<div class="a" style="left:1472px;top:849px;width:72px;height:20px;background:#3b3b3b;border-radius:4px;"></div>
<div class="t" style="left:1494.50px;top:854px;font-size:11px;color:#eee;letter-spacing:-0.251px;">Close</div>
</body></html>
